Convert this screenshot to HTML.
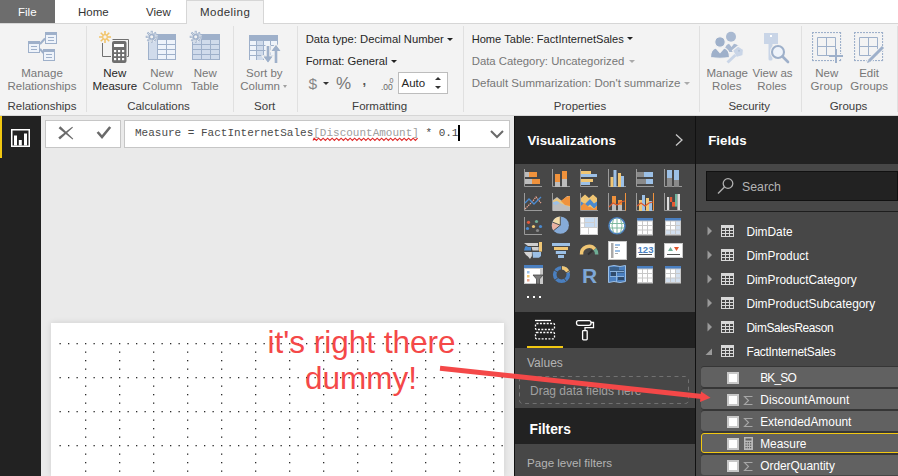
<!DOCTYPE html>
<html><head><meta charset="utf-8"><style>
html,body{margin:0;padding:0;}
body{width:898px;height:476px;overflow:hidden;position:relative;background:#eaeaea;font-family:'Liberation Sans', sans-serif;}
.t{position:absolute;white-space:nowrap;line-height:1;}
.r{position:absolute;}
svg.r{overflow:visible;}
</style></head><body>
<div class="r" style="left:0px;top:0px;width:898px;height:23px;background:#ffffff;"></div><div class="r" style="left:0px;top:23px;width:898px;height:1px;background:#d6d6d6;"></div><div class="r" style="left:0px;top:0px;width:55px;height:23px;background:#6d6d6d;"></div><div class="t" style="left:18px;top:6.87px;font-size:11.5px;color:#ffffff;font-weight:400;font-family:'Liberation Sans', sans-serif;">File</div><div class="t" style="left:78px;top:7.27px;font-size:11.5px;color:#333;font-weight:400;font-family:'Liberation Sans', sans-serif;">Home</div><div class="t" style="left:146px;top:7.27px;font-size:11.5px;color:#333;font-weight:400;font-family:'Liberation Sans', sans-serif;">View</div><div class="r" style="left:186px;top:0px;width:78px;height:24px;background:#f3f3f3;border:1px solid #d6d6d6;border-bottom:none;box-sizing:border-box;"></div><div class="t" style="left:200px;top:7.27px;font-size:11.5px;color:#333;font-weight:400;font-family:'Liberation Sans', sans-serif;letter-spacing:0.45px;">Modeling</div><div class="r" style="left:0px;top:24px;width:898px;height:91px;background:#f3f3f3;"></div><div class="r" style="left:0px;top:115px;width:898px;height:1px;background:#d6d6d6;"></div><div class="r" style="left:86px;top:26px;width:1px;height:86px;background:#e0e0e0;"></div><div class="r" style="left:233px;top:26px;width:1px;height:86px;background:#e0e0e0;"></div><div class="r" style="left:297px;top:26px;width:1px;height:86px;background:#e0e0e0;"></div><div class="r" style="left:463px;top:26px;width:1px;height:86px;background:#e0e0e0;"></div><div class="r" style="left:699px;top:26px;width:1px;height:86px;background:#e0e0e0;"></div><div class="r" style="left:801px;top:26px;width:1px;height:86px;background:#e0e0e0;"></div><div class="r" style="left:897px;top:26px;width:1px;height:86px;background:#e0e0e0;"></div><div class="t" style="left:-258px;width:600px;text-align:center;top:100.77px;font-size:11.5px;color:#3c3c3c;font-weight:400;font-family:'Liberation Sans', sans-serif;">Relationships</div><div class="t" style="left:-141.5px;width:600px;text-align:center;top:100.77px;font-size:11.5px;color:#3c3c3c;font-weight:400;font-family:'Liberation Sans', sans-serif;">Calculations</div><div class="t" style="left:-35.39999999999998px;width:600px;text-align:center;top:100.77px;font-size:11.5px;color:#3c3c3c;font-weight:400;font-family:'Liberation Sans', sans-serif;">Sort</div><div class="t" style="left:79.60000000000002px;width:600px;text-align:center;top:100.77px;font-size:11.5px;color:#3c3c3c;font-weight:400;font-family:'Liberation Sans', sans-serif;">Formatting</div><div class="t" style="left:280px;width:600px;text-align:center;top:100.77px;font-size:11.5px;color:#3c3c3c;font-weight:400;font-family:'Liberation Sans', sans-serif;">Properties</div><div class="t" style="left:449.20000000000005px;width:600px;text-align:center;top:100.77px;font-size:11.5px;color:#3c3c3c;font-weight:400;font-family:'Liberation Sans', sans-serif;">Security</div><div class="t" style="left:548.5px;width:600px;text-align:center;top:100.77px;font-size:11.5px;color:#3c3c3c;font-weight:400;font-family:'Liberation Sans', sans-serif;">Groups</div><div class="t" style="left:-258px;width:600px;text-align:center;top:68.27px;font-size:11.5px;color:#777777;font-weight:400;font-family:'Liberation Sans', sans-serif;">Manage</div><div class="t" style="left:-258px;width:600px;text-align:center;top:81.27px;font-size:11.5px;color:#777777;font-weight:400;font-family:'Liberation Sans', sans-serif;">Relationships</div><div class="t" style="left:-185.2px;width:600px;text-align:center;top:68.27px;font-size:11.5px;color:#262626;font-weight:400;font-family:'Liberation Sans', sans-serif;">New</div><div class="t" style="left:-185.2px;width:600px;text-align:center;top:81.27px;font-size:11.5px;color:#262626;font-weight:400;font-family:'Liberation Sans', sans-serif;">Measure</div><div class="t" style="left:-138.3px;width:600px;text-align:center;top:68.27px;font-size:11.5px;color:#777777;font-weight:400;font-family:'Liberation Sans', sans-serif;">New</div><div class="t" style="left:-137.6px;width:600px;text-align:center;top:81.27px;font-size:11.5px;color:#777777;font-weight:400;font-family:'Liberation Sans', sans-serif;">Column</div><div class="t" style="left:-94.69999999999999px;width:600px;text-align:center;top:68.27px;font-size:11.5px;color:#777777;font-weight:400;font-family:'Liberation Sans', sans-serif;">New</div><div class="t" style="left:-95.19999999999999px;width:600px;text-align:center;top:81.27px;font-size:11.5px;color:#777777;font-weight:400;font-family:'Liberation Sans', sans-serif;">Table</div><div class="t" style="left:-35.69999999999999px;width:600px;text-align:center;top:68.27px;font-size:11.5px;color:#777777;font-weight:400;font-family:'Liberation Sans', sans-serif;">Sort by</div><div class="t" style="left:-39.89999999999998px;width:600px;text-align:center;top:81.27px;font-size:11.5px;color:#777777;font-weight:400;font-family:'Liberation Sans', sans-serif;">Column</div><div class="r" style="left:283px;top:85px;width:0;height:0;border-left:2.5px solid transparent;border-right:2.5px solid transparent;border-top:3px solid #a0a0a0;"></div><div class="t" style="left:427.20000000000005px;width:600px;text-align:center;top:68.27px;font-size:11.5px;color:#777777;font-weight:400;font-family:'Liberation Sans', sans-serif;">Manage</div><div class="t" style="left:426.79999999999995px;width:600px;text-align:center;top:81.27px;font-size:11.5px;color:#777777;font-weight:400;font-family:'Liberation Sans', sans-serif;">Roles</div><div class="t" style="left:472.6px;width:600px;text-align:center;top:68.27px;font-size:11.5px;color:#777777;font-weight:400;font-family:'Liberation Sans', sans-serif;">View as</div><div class="t" style="left:471.9px;width:600px;text-align:center;top:81.27px;font-size:11.5px;color:#777777;font-weight:400;font-family:'Liberation Sans', sans-serif;">Roles</div><div class="t" style="left:526.8px;width:600px;text-align:center;top:68.27px;font-size:11.5px;color:#777777;font-weight:400;font-family:'Liberation Sans', sans-serif;">New</div><div class="t" style="left:526.6px;width:600px;text-align:center;top:81.27px;font-size:11.5px;color:#777777;font-weight:400;font-family:'Liberation Sans', sans-serif;">Group</div><div class="t" style="left:569.1px;width:600px;text-align:center;top:68.27px;font-size:11.5px;color:#777777;font-weight:400;font-family:'Liberation Sans', sans-serif;">Edit</div><div class="t" style="left:569.1px;width:600px;text-align:center;top:81.27px;font-size:11.5px;color:#777777;font-weight:400;font-family:'Liberation Sans', sans-serif;">Groups</div><div class="t" style="left:305.7px;top:34.48px;font-size:11.25px;color:#262626;font-weight:400;font-family:'Liberation Sans', sans-serif;">Data type: Decimal Number</div><div class="r" style="left:447px;top:37.5px;width:0;height:0;border-left:3px solid transparent;border-right:3px solid transparent;border-top:3px solid #222;"></div><div class="t" style="left:305.7px;top:56.48px;font-size:11.25px;color:#262626;font-weight:400;font-family:'Liberation Sans', sans-serif;">Format: General</div><div class="r" style="left:390.5px;top:59.5px;width:0;height:0;border-left:3px solid transparent;border-right:3px solid transparent;border-top:3px solid #222;"></div><div class="t" style="left:308.5px;top:76.38px;font-size:15.5px;color:#858585;font-weight:400;font-family:'Liberation Sans', sans-serif;">$</div><div class="r" style="left:322.5px;top:81.5px;width:0;height:0;border-left:3px solid transparent;border-right:3px solid transparent;border-top:3px solid #333;"></div><div class="t" style="left:336px;top:75.41px;font-size:17px;color:#777;font-weight:400;font-family:'Liberation Sans', sans-serif;">%</div><div class="t" style="left:362.5px;top:73.50px;font-size:13px;color:#555;font-weight:700;font-family:'Liberation Sans', sans-serif;">,</div><div class="t" style="left:381px;top:82.80px;font-size:8.5px;color:#666;font-weight:400;font-family:'Liberation Sans', sans-serif;">.00</div><div class="t" style="left:389.5px;top:77.07px;font-size:7px;color:#666;font-weight:400;font-family:'Liberation Sans', sans-serif;">0</div><div class="r" style="left:398px;top:72px;width:50px;height:22px;background:#ffffff;border:1px solid #bdbdbd;box-sizing:border-box;"></div><div class="t" style="left:401.5px;top:78.07px;font-size:11.5px;color:#262626;font-weight:400;font-family:'Liberation Sans', sans-serif;">Auto</div><div class="r" style="left:435px;top:76.5px;width:0;height:0;border-left:3px solid transparent;border-right:3px solid transparent;border-bottom:3px solid #333;"></div><div class="r" style="left:435px;top:86px;width:0;height:0;border-left:3px solid transparent;border-right:3px solid transparent;border-top:3px solid #333;"></div><div class="t" style="left:471.7px;top:34.10px;font-size:11.1px;color:#262626;font-weight:400;font-family:'Liberation Sans', sans-serif;">Home Table: FactInternetSales</div><div class="r" style="left:627px;top:37px;width:0;height:0;border-left:3px solid transparent;border-right:3px solid transparent;border-top:3px solid #222;"></div><div class="t" style="left:471.7px;top:56.09px;font-size:11.35px;color:#777777;font-weight:400;font-family:'Liberation Sans', sans-serif;">Data Category: Uncategorized</div><div class="r" style="left:629px;top:59.5px;width:0;height:0;border-left:3px solid transparent;border-right:3px solid transparent;border-top:3px solid #aaa;"></div><div class="t" style="left:471.7px;top:78.27px;font-size:11.5px;color:#777777;font-weight:400;font-family:'Liberation Sans', sans-serif;">Default Summarization: Don&#39;t summarize</div><div class="r" style="left:683.5px;top:81.5px;width:0;height:0;border-left:3px solid transparent;border-right:3px solid transparent;border-top:3px solid #aaa;"></div><svg class="r" style="left:24px;top:28px;" width="38" height="38" viewBox="0 0 38 38"><rect x="21.5" y="4.5" width="11" height="11" fill="#eef3fa" stroke="#9eb0ca"/><rect x="21" y="4" width="12" height="3" fill="#9eb0ca"/><rect x="24" y="9" width="6" height="1" fill="#9eb0ca"/><rect x="24" y="12" width="6" height="1" fill="#9eb0ca"/><rect x="4.5" y="13.5" width="11" height="11" fill="#eef3fa" stroke="#9eb0ca"/><rect x="4" y="13" width="12" height="3" fill="#9eb0ca"/><rect x="7" y="18" width="6" height="1" fill="#9eb0ca"/><rect x="7" y="21" width="6" height="1" fill="#9eb0ca"/><rect x="19.5" y="21.5" width="11" height="11" fill="#eef3fa" stroke="#9eb0ca"/><rect x="19" y="21" width="12" height="3" fill="#9eb0ca"/><rect x="22" y="26" width="6" height="1" fill="#9eb0ca"/><rect x="22" y="29" width="6" height="1" fill="#9eb0ca"/><path d="M16 16 L21 10.5 M16 21 L19.5 25" stroke="#9eb0ca" stroke-width="2"/></svg><svg class="r" style="left:96px;top:28px;" width="38" height="38" viewBox="0 0 38 38"><line x1="11.5" y1="9.0" x2="15.0" y2="9.0" stroke="#f2c46a" stroke-width="1.6"/><line x1="10.767768125698066" y1="10.767765780233894" x2="13.242643501675357" y2="13.242637872561346" stroke="#f2c46a" stroke-width="1.6"/><line x1="9.000003316987241" y1="11.499999999997799" x2="9.00000796076938" y2="14.999999999994719" stroke="#f2c46a" stroke-width="1.6"/><line x1="7.23223656523339" y1="10.767770471159126" x2="4.757367756560136" y2="13.242649130781903" stroke="#f2c46a" stroke-width="1.6"/><line x1="6.500000000008802" y1="9.000006633974483" x2="3.0000000000211244" y2="9.00001592153876" stroke="#f2c46a" stroke-width="1.6"/><line x1="7.2322271833829275" y1="7.232238910703785" x2="4.757345240119025" y2="4.757373385689084" stroke="#f2c46a" stroke-width="1.6"/><line x1="8.999990049038274" y1="6.500000000019805" x2="8.999976117691856" y2="3.000000000047531" stroke="#f2c46a" stroke-width="1.6"/><line x1="10.767758743822707" y1="7.23222483792809" x2="13.242620985174497" y2="4.757339611027417" stroke="#f2c46a" stroke-width="1.6"/><circle cx="9" cy="9" r="2.3" fill="none" stroke="#f2c46a" stroke-width="1.2"/><path d="M6.5 15 V28.5 H15 M16.5 11.5 H32.5 V28.5 H31" fill="none" stroke="#707070" stroke-width="1"/><rect x="16" y="13" width="14.5" height="22" rx="2" fill="#6e6e6e"/><rect x="18" y="16" width="10" height="3" fill="#fff"/><rect x="18" y="22" width="2.2" height="2.2" fill="#fff"/><rect x="18" y="26" width="2.2" height="2.2" fill="#fff"/><rect x="18" y="30" width="2.2" height="2.2" fill="#fff"/><rect x="22" y="22" width="2.2" height="2.2" fill="#fff"/><rect x="22" y="26" width="2.2" height="2.2" fill="#fff"/><rect x="22" y="30" width="2.2" height="2.2" fill="#fff"/><rect x="26" y="22" width="2.2" height="2.2" fill="#fff"/><rect x="26" y="26" width="2.2" height="2.2" fill="#fff"/><rect x="26" y="30" width="2.2" height="2.2" fill="#fff"/></svg><svg class="r" style="left:142px;top:28px;" width="38" height="38" viewBox="0 0 38 38"><rect x="6" y="6" width="28" height="26" fill="#9eb0ca"/><rect x="7" y="12" width="8" height="19" fill="#d0dbeb"/><rect x="16" y="12" width="8" height="4" fill="#eef3fa"/><rect x="16" y="17" width="8" height="4" fill="#eef3fa"/><rect x="16" y="22" width="8" height="4" fill="#eef3fa"/><rect x="16" y="27" width="8" height="4" fill="#eef3fa"/><rect x="25" y="12" width="8" height="4" fill="#eef3fa"/><rect x="25" y="17" width="8" height="4" fill="#eef3fa"/><rect x="25" y="22" width="8" height="4" fill="#eef3fa"/><rect x="25" y="27" width="8" height="4" fill="#eef3fa"/><line x1="11.70" y1="8.80" x2="15.70" y2="8.80" stroke="#fff" stroke-width="3"/><line x1="11.11" y1="10.21" x2="13.94" y2="13.04" stroke="#fff" stroke-width="3"/><line x1="9.70" y1="10.80" x2="9.70" y2="14.80" stroke="#fff" stroke-width="3"/><line x1="8.29" y1="10.21" x2="5.46" y2="13.04" stroke="#fff" stroke-width="3"/><line x1="7.70" y1="8.80" x2="3.70" y2="8.80" stroke="#fff" stroke-width="3"/><line x1="8.29" y1="7.39" x2="5.46" y2="4.56" stroke="#fff" stroke-width="3"/><line x1="9.70" y1="6.80" x2="9.70" y2="2.80" stroke="#fff" stroke-width="3"/><line x1="11.11" y1="7.39" x2="13.94" y2="4.56" stroke="#fff" stroke-width="3"/><line x1="11.70" y1="8.80" x2="15.70" y2="8.80" stroke="#9eb0ca" stroke-width="2.2"/><line x1="11.11" y1="10.21" x2="13.94" y2="13.04" stroke="#9eb0ca" stroke-width="2.2"/><line x1="9.70" y1="10.80" x2="9.70" y2="14.80" stroke="#9eb0ca" stroke-width="2.2"/><line x1="8.29" y1="10.21" x2="5.46" y2="13.04" stroke="#9eb0ca" stroke-width="2.2"/><line x1="7.70" y1="8.80" x2="3.70" y2="8.80" stroke="#9eb0ca" stroke-width="2.2"/><line x1="8.29" y1="7.39" x2="5.46" y2="4.56" stroke="#9eb0ca" stroke-width="2.2"/><line x1="9.70" y1="6.80" x2="9.70" y2="2.80" stroke="#9eb0ca" stroke-width="2.2"/><line x1="11.11" y1="7.39" x2="13.94" y2="4.56" stroke="#9eb0ca" stroke-width="2.2"/><line x1="12.20" y1="8.80" x2="14.90" y2="8.80" stroke="#f3f3f3" stroke-width="0.7"/><line x1="11.47" y1="10.57" x2="13.38" y2="12.48" stroke="#f3f3f3" stroke-width="0.7"/><line x1="9.70" y1="11.30" x2="9.70" y2="14.00" stroke="#f3f3f3" stroke-width="0.7"/><line x1="7.93" y1="10.57" x2="6.02" y2="12.48" stroke="#f3f3f3" stroke-width="0.7"/><line x1="7.20" y1="8.80" x2="4.50" y2="8.80" stroke="#f3f3f3" stroke-width="0.7"/><line x1="7.93" y1="7.03" x2="6.02" y2="5.12" stroke="#f3f3f3" stroke-width="0.7"/><line x1="9.70" y1="6.30" x2="9.70" y2="3.60" stroke="#f3f3f3" stroke-width="0.7"/><line x1="11.47" y1="7.03" x2="13.38" y2="5.12" stroke="#f3f3f3" stroke-width="0.7"/><circle cx="9.7" cy="8.8" r="2.2" fill="#f3f3f3" stroke="#9eb0ca" stroke-width="1.2"/></svg><svg class="r" style="left:186px;top:28px;" width="38" height="38" viewBox="0 0 38 38"><rect x="6" y="6" width="28" height="26" fill="#9eb0ca"/><rect x="7" y="12" width="8" height="4" fill="#d0dbeb"/><rect x="7" y="17" width="8" height="4" fill="#d0dbeb"/><rect x="7" y="22" width="8" height="4" fill="#d0dbeb"/><rect x="7" y="27" width="8" height="4" fill="#d0dbeb"/><rect x="16" y="12" width="8" height="4" fill="#d0dbeb"/><rect x="16" y="17" width="8" height="4" fill="#d0dbeb"/><rect x="16" y="22" width="8" height="4" fill="#d0dbeb"/><rect x="16" y="27" width="8" height="4" fill="#d0dbeb"/><rect x="25" y="12" width="8" height="4" fill="#d0dbeb"/><rect x="25" y="17" width="8" height="4" fill="#d0dbeb"/><rect x="25" y="22" width="8" height="4" fill="#d0dbeb"/><rect x="25" y="27" width="8" height="4" fill="#d0dbeb"/><line x1="11.70" y1="8.80" x2="15.70" y2="8.80" stroke="#fff" stroke-width="3"/><line x1="11.11" y1="10.21" x2="13.94" y2="13.04" stroke="#fff" stroke-width="3"/><line x1="9.70" y1="10.80" x2="9.70" y2="14.80" stroke="#fff" stroke-width="3"/><line x1="8.29" y1="10.21" x2="5.46" y2="13.04" stroke="#fff" stroke-width="3"/><line x1="7.70" y1="8.80" x2="3.70" y2="8.80" stroke="#fff" stroke-width="3"/><line x1="8.29" y1="7.39" x2="5.46" y2="4.56" stroke="#fff" stroke-width="3"/><line x1="9.70" y1="6.80" x2="9.70" y2="2.80" stroke="#fff" stroke-width="3"/><line x1="11.11" y1="7.39" x2="13.94" y2="4.56" stroke="#fff" stroke-width="3"/><line x1="11.70" y1="8.80" x2="15.70" y2="8.80" stroke="#9eb0ca" stroke-width="2.2"/><line x1="11.11" y1="10.21" x2="13.94" y2="13.04" stroke="#9eb0ca" stroke-width="2.2"/><line x1="9.70" y1="10.80" x2="9.70" y2="14.80" stroke="#9eb0ca" stroke-width="2.2"/><line x1="8.29" y1="10.21" x2="5.46" y2="13.04" stroke="#9eb0ca" stroke-width="2.2"/><line x1="7.70" y1="8.80" x2="3.70" y2="8.80" stroke="#9eb0ca" stroke-width="2.2"/><line x1="8.29" y1="7.39" x2="5.46" y2="4.56" stroke="#9eb0ca" stroke-width="2.2"/><line x1="9.70" y1="6.80" x2="9.70" y2="2.80" stroke="#9eb0ca" stroke-width="2.2"/><line x1="11.11" y1="7.39" x2="13.94" y2="4.56" stroke="#9eb0ca" stroke-width="2.2"/><line x1="12.20" y1="8.80" x2="14.90" y2="8.80" stroke="#f3f3f3" stroke-width="0.7"/><line x1="11.47" y1="10.57" x2="13.38" y2="12.48" stroke="#f3f3f3" stroke-width="0.7"/><line x1="9.70" y1="11.30" x2="9.70" y2="14.00" stroke="#f3f3f3" stroke-width="0.7"/><line x1="7.93" y1="10.57" x2="6.02" y2="12.48" stroke="#f3f3f3" stroke-width="0.7"/><line x1="7.20" y1="8.80" x2="4.50" y2="8.80" stroke="#f3f3f3" stroke-width="0.7"/><line x1="7.93" y1="7.03" x2="6.02" y2="5.12" stroke="#f3f3f3" stroke-width="0.7"/><line x1="9.70" y1="6.30" x2="9.70" y2="3.60" stroke="#f3f3f3" stroke-width="0.7"/><line x1="11.47" y1="7.03" x2="13.38" y2="5.12" stroke="#f3f3f3" stroke-width="0.7"/><circle cx="9.7" cy="8.8" r="2.2" fill="#f3f3f3" stroke="#9eb0ca" stroke-width="1.2"/></svg><svg class="r" style="left:245px;top:30px;" width="40" height="38" viewBox="0 0 40 38"><rect x="4" y="5" width="29" height="25" fill="#9eb0ca"/><rect x="5" y="11" width="6" height="4" fill="#eef3fa"/><rect x="5" y="16" width="6" height="4" fill="#eef3fa"/><rect x="5" y="21" width="6" height="4" fill="#eef3fa"/><rect x="5" y="26" width="6" height="4" fill="#eef3fa"/><rect x="12" y="11" width="6" height="4" fill="#d0dbeb"/><rect x="12" y="16" width="6" height="4" fill="#d0dbeb"/><rect x="12" y="21" width="6" height="4" fill="#d0dbeb"/><rect x="12" y="26" width="6" height="4" fill="#d0dbeb"/><rect x="19" y="11" width="6" height="4" fill="#eef3fa"/><rect x="19" y="16" width="6" height="4" fill="#eef3fa"/><rect x="19" y="21" width="6" height="4" fill="#eef3fa"/><rect x="19" y="26" width="6" height="4" fill="#eef3fa"/><rect x="26" y="11" width="6" height="4" fill="#eef3fa"/><rect x="26" y="16" width="6" height="4" fill="#eef3fa"/><rect x="26" y="21" width="6" height="4" fill="#eef3fa"/><rect x="26" y="26" width="6" height="4" fill="#eef3fa"/><path d="M23 15 V30 M31 18 V33" stroke="#f3f3f3" stroke-width="5"/><path d="M17.5 26 L23 33.5 L28.5 26 Z M25.5 21.5 L31 14 L36.5 21.5 Z" fill="#9eb0ca" stroke="#f3f3f3" stroke-width="1.5"/><path d="M23 16 V27 M31 21 V33" stroke="#9eb0ca" stroke-width="2.6"/><path d="M18.5 26.5 L23 32.5 L27.5 26.5 Z M26.5 21 L31 15 L35.5 21 Z" fill="#9eb0ca"/></svg><svg class="r" style="left:706px;top:28px;" width="40" height="38" viewBox="0 0 40 38"><circle cx="25" cy="8.8" r="5" fill="#a9b9d1"/><path d="M18.5 23 Q19.5 16.3 23 15.8 L25.5 19 L28 15.8 Q32 16.3 33.5 19.5 L29 24 L21 24 Z" fill="#a9b9d1"/><circle cx="14" cy="14" r="5.2" fill="#9eb0ca" stroke="#f3f3f3" stroke-width="1"/><path d="M4.5 29.5 Q4.5 21 10 20 L14 24.5 L18 20 Q23.5 21 23.5 29.5 Q14 31 4.5 29.5 Z" fill="#9eb0ca" stroke="#f3f3f3" stroke-width="1.2"/><path d="M21.5 34.5 L29.5 27" stroke="#f3f3f3" stroke-width="5"/><path d="M26.5 22.5 L32 18 L37.5 21.5 L37 27.5 L30.5 29.5 Z" fill="#c9d5e7" stroke="#f3f3f3" stroke-width="1.2" stroke-linejoin="round"/><path d="M21.5 34.5 L29.5 27" stroke="#c9d5e7" stroke-width="3"/><circle cx="33" cy="22.8" r="1" fill="#b3c2d8"/></svg><svg class="r" style="left:758px;top:28px;" width="38" height="38" viewBox="0 0 38 38"><rect x="6" y="5" width="14" height="11" fill="#c9d5e7"/><rect x="12" y="7" width="2" height="2" fill="#fff"/><rect x="10.5" y="15" width="4" height="17.5" rx="1.5" fill="#c9d5e7"/><circle cx="20" cy="24" r="6" fill="#eef3fa" stroke="#f3f3f3" stroke-width="4"/><circle cx="20" cy="24" r="6" fill="#eef3fa" stroke="#9eb0ca" stroke-width="2.1"/><path d="M24.5 28.5 L30 34" stroke="#9eb0ca" stroke-width="2.6" stroke-linecap="round"/></svg><svg class="r" style="left:808px;top:28px;" width="82" height="38" viewBox="0 0 82 38"><rect x="4" y="4" width="2" height="1.1" fill="#9eb0ca"/><rect x="4" y="32" width="2" height="1.1" fill="#9eb0ca"/><rect x="4" y="4" width="1.1" height="2" fill="#9eb0ca"/><rect x="32" y="4" width="1.1" height="2" fill="#9eb0ca"/><rect x="7" y="4" width="2" height="1.1" fill="#9eb0ca"/><rect x="7" y="32" width="2" height="1.1" fill="#9eb0ca"/><rect x="4" y="7" width="1.1" height="2" fill="#9eb0ca"/><rect x="32" y="7" width="1.1" height="2" fill="#9eb0ca"/><rect x="10" y="4" width="2" height="1.1" fill="#9eb0ca"/><rect x="10" y="32" width="2" height="1.1" fill="#9eb0ca"/><rect x="4" y="10" width="1.1" height="2" fill="#9eb0ca"/><rect x="32" y="10" width="1.1" height="2" fill="#9eb0ca"/><rect x="13" y="4" width="2" height="1.1" fill="#9eb0ca"/><rect x="13" y="32" width="2" height="1.1" fill="#9eb0ca"/><rect x="4" y="13" width="1.1" height="2" fill="#9eb0ca"/><rect x="32" y="13" width="1.1" height="2" fill="#9eb0ca"/><rect x="16" y="4" width="2" height="1.1" fill="#9eb0ca"/><rect x="16" y="32" width="2" height="1.1" fill="#9eb0ca"/><rect x="4" y="16" width="1.1" height="2" fill="#9eb0ca"/><rect x="32" y="16" width="1.1" height="2" fill="#9eb0ca"/><rect x="19" y="4" width="2" height="1.1" fill="#9eb0ca"/><rect x="19" y="32" width="2" height="1.1" fill="#9eb0ca"/><rect x="4" y="19" width="1.1" height="2" fill="#9eb0ca"/><rect x="32" y="19" width="1.1" height="2" fill="#9eb0ca"/><rect x="22" y="4" width="2" height="1.1" fill="#9eb0ca"/><rect x="22" y="32" width="2" height="1.1" fill="#9eb0ca"/><rect x="4" y="22" width="1.1" height="2" fill="#9eb0ca"/><rect x="32" y="22" width="1.1" height="2" fill="#9eb0ca"/><rect x="25" y="4" width="2" height="1.1" fill="#9eb0ca"/><rect x="25" y="32" width="2" height="1.1" fill="#9eb0ca"/><rect x="4" y="25" width="1.1" height="2" fill="#9eb0ca"/><rect x="32" y="25" width="1.1" height="2" fill="#9eb0ca"/><rect x="28" y="4" width="2" height="1.1" fill="#9eb0ca"/><rect x="28" y="32" width="2" height="1.1" fill="#9eb0ca"/><rect x="4" y="28" width="1.1" height="2" fill="#9eb0ca"/><rect x="32" y="28" width="1.1" height="2" fill="#9eb0ca"/><rect x="31" y="4" width="2" height="1.1" fill="#9eb0ca"/><rect x="31" y="32" width="2" height="1.1" fill="#9eb0ca"/><rect x="4" y="31" width="1.1" height="2" fill="#9eb0ca"/><rect x="32" y="31" width="1.1" height="2" fill="#9eb0ca"/><path d="M9.5 9.5 H27.5 V27.5 H9.5 Z M18.5 9.5 V27.5 M9.5 18.5 H27.5" fill="none" stroke="#9eb0ca" stroke-width="1"/><path d="M28 21 V35 M21 28 H35" stroke="#f3f3f3" stroke-width="4"/><path d="M28 21 V35 M21 28 H35" stroke="#9eb0ca" stroke-width="2"/><rect x="46" y="4" width="2" height="1.1" fill="#9eb0ca"/><rect x="46" y="32" width="2" height="1.1" fill="#9eb0ca"/><rect x="46" y="4" width="1.1" height="2" fill="#9eb0ca"/><rect x="74" y="4" width="1.1" height="2" fill="#9eb0ca"/><rect x="49" y="4" width="2" height="1.1" fill="#9eb0ca"/><rect x="49" y="32" width="2" height="1.1" fill="#9eb0ca"/><rect x="46" y="7" width="1.1" height="2" fill="#9eb0ca"/><rect x="74" y="7" width="1.1" height="2" fill="#9eb0ca"/><rect x="52" y="4" width="2" height="1.1" fill="#9eb0ca"/><rect x="52" y="32" width="2" height="1.1" fill="#9eb0ca"/><rect x="46" y="10" width="1.1" height="2" fill="#9eb0ca"/><rect x="74" y="10" width="1.1" height="2" fill="#9eb0ca"/><rect x="55" y="4" width="2" height="1.1" fill="#9eb0ca"/><rect x="55" y="32" width="2" height="1.1" fill="#9eb0ca"/><rect x="46" y="13" width="1.1" height="2" fill="#9eb0ca"/><rect x="74" y="13" width="1.1" height="2" fill="#9eb0ca"/><rect x="58" y="4" width="2" height="1.1" fill="#9eb0ca"/><rect x="58" y="32" width="2" height="1.1" fill="#9eb0ca"/><rect x="46" y="16" width="1.1" height="2" fill="#9eb0ca"/><rect x="74" y="16" width="1.1" height="2" fill="#9eb0ca"/><rect x="61" y="4" width="2" height="1.1" fill="#9eb0ca"/><rect x="61" y="32" width="2" height="1.1" fill="#9eb0ca"/><rect x="46" y="19" width="1.1" height="2" fill="#9eb0ca"/><rect x="74" y="19" width="1.1" height="2" fill="#9eb0ca"/><rect x="64" y="4" width="2" height="1.1" fill="#9eb0ca"/><rect x="64" y="32" width="2" height="1.1" fill="#9eb0ca"/><rect x="46" y="22" width="1.1" height="2" fill="#9eb0ca"/><rect x="74" y="22" width="1.1" height="2" fill="#9eb0ca"/><rect x="67" y="4" width="2" height="1.1" fill="#9eb0ca"/><rect x="67" y="32" width="2" height="1.1" fill="#9eb0ca"/><rect x="46" y="25" width="1.1" height="2" fill="#9eb0ca"/><rect x="74" y="25" width="1.1" height="2" fill="#9eb0ca"/><rect x="70" y="4" width="2" height="1.1" fill="#9eb0ca"/><rect x="70" y="32" width="2" height="1.1" fill="#9eb0ca"/><rect x="46" y="28" width="1.1" height="2" fill="#9eb0ca"/><rect x="74" y="28" width="1.1" height="2" fill="#9eb0ca"/><rect x="73" y="4" width="2" height="1.1" fill="#9eb0ca"/><rect x="73" y="32" width="2" height="1.1" fill="#9eb0ca"/><rect x="46" y="31" width="1.1" height="2" fill="#9eb0ca"/><rect x="74" y="31" width="1.1" height="2" fill="#9eb0ca"/><path d="M51.5 9.5 H69.5 V27.5 H51.5 Z M60.5 9.5 V27.5 M51.5 18.5 H69.5" fill="none" stroke="#9eb0ca" stroke-width="1"/><path d="M60 34 L75 19" stroke="#f3f3f3" stroke-width="5"/><path d="M61 33 L75 19" stroke="#9eb0ca" stroke-width="3"/><path d="M59 35 L60 32 L62 34 Z" fill="#9eb0ca"/></svg><div class="r" style="left:0px;top:116px;width:898px;height:360px;background:#eaeaea;"></div><div class="r" style="left:0px;top:116px;width:41px;height:360px;background:#222222;"></div><div class="r" style="left:0px;top:116px;width:2px;height:42px;background:#f2c811;"></div><svg class="r" style="left:10px;top:128px;" width="22" height="20" viewBox="0 0 22 20"><rect x="1.75" y="1.75" width="17.5" height="16.5" fill="none" stroke="#fff" stroke-width="1.5"/><rect x="4" y="7.5" width="3" height="10" fill="#fff"/><rect x="8.8" y="12" width="3" height="5.5" fill="#fff"/><rect x="14" y="5.5" width="3" height="12" fill="#fff"/></svg><div class="r" style="left:45px;top:120px;width:76px;height:28px;background:#ffffff;border:1px solid #c6c6c6;box-sizing:border-box;"></div><svg class="r" style="left:52px;top:120px;" width="30" height="26" viewBox="0 0 30 26"><path d="M6.64 8.17 L20.53 19.51 L21.27 18.69 L8.36 6.23 Z" fill="#6a6a6a"/><path d="M7.93 19.50 L20.95 7.62 L20.25 6.78 L6.27 17.50 Z" fill="#6a6a6a"/></svg><svg class="r" style="left:90px;top:120px;" width="26" height="26" viewBox="0 0 26 26"><path d="M7.6 12 L12 17 L20.2 7" fill="none" stroke="#6a6a6a" stroke-width="2.6"/></svg><div class="r" style="left:124px;top:120px;width:386px;height:28px;background:#ffffff;border:1px solid #c6c6c6;box-sizing:border-box;"></div><div class="t" style="left:135px;top:128.19px;font-size:11px;color:#4a4a4a;font-weight:400;font-family:'Liberation Mono', monospace;letter-spacing:0px;">Measure = FactInternetSales<span style="color:#a0a0a0">[DiscountAmount]</span> * 0.1</div><svg class="r" style="left:313px;top:138px;" width="110" height="4" viewBox="0 0 110 4"><path d="M0 2.5 L1.125 0.2 L3.375 2.5 L5.625 0.2 L7.875 2.5 L10.125 0.2 L12.375 2.5 L14.625 0.2 L16.875 2.5 L19.125 0.2 L21.375 2.5 L23.625 0.2 L25.875 2.5 L28.125 0.2 L30.375 2.5 L32.625 0.2 L34.875 2.5 L37.125 0.2 L39.375 2.5 L41.625 0.2 L43.875 2.5 L46.125 0.2 L48.375 2.5 L50.625 0.2 L52.875 2.5 L55.125 0.2 L57.375 2.5 L59.625 0.2 L61.875 2.5 L64.125 0.2 L66.375 2.5 L68.625 0.2 L70.875 2.5 L73.125 0.2 L75.375 2.5 L77.625 0.2 L79.875 2.5 L82.125 0.2 L84.375 2.5 L86.625 0.2 L88.875 2.5 L91.125 0.2 L93.375 2.5 L95.625 0.2 L97.875 2.5 L100.125 0.2 L102.375 2.5 L104.625 0.2" fill="none" stroke="#e02828" stroke-width="1.1"/></svg><div class="r" style="left:458px;top:125px;width:2px;height:16px;background:#000;"></div><svg class="r" style="left:489px;top:129px;" width="16" height="10" viewBox="0 0 16 10"><path d="M2 2 L8 8 L14 2" fill="none" stroke="#6a6a6a" stroke-width="2"/></svg><div class="r" style="left:51px;top:323px;width:453px;height:153px;background:#ffffff;box-shadow:0 0 6px rgba(0,0,0,0.12);"></div><svg class="r" style="left:51px;top:323px;" width="453" height="153" viewBox="0 0 453 153"><rect x="8.5" y="20.0" width="1.3" height="1.3" fill="#2a2a2a"/><rect x="17.0" y="20.0" width="1.3" height="1.3" fill="#2a2a2a"/><rect x="25.5" y="20.0" width="1.3" height="1.3" fill="#2a2a2a"/><rect x="34.0" y="20.0" width="1.3" height="1.3" fill="#2a2a2a"/><rect x="42.5" y="20.0" width="1.3" height="1.3" fill="#2a2a2a"/><rect x="51.0" y="20.0" width="1.3" height="1.3" fill="#2a2a2a"/><rect x="59.5" y="20.0" width="1.3" height="1.3" fill="#2a2a2a"/><rect x="68.0" y="20.0" width="1.3" height="1.3" fill="#2a2a2a"/><rect x="76.5" y="20.0" width="1.3" height="1.3" fill="#2a2a2a"/><rect x="85.0" y="20.0" width="1.3" height="1.3" fill="#2a2a2a"/><rect x="93.5" y="20.0" width="1.3" height="1.3" fill="#2a2a2a"/><rect x="102.0" y="20.0" width="1.3" height="1.3" fill="#2a2a2a"/><rect x="110.5" y="20.0" width="1.3" height="1.3" fill="#2a2a2a"/><rect x="119.0" y="20.0" width="1.3" height="1.3" fill="#2a2a2a"/><rect x="127.5" y="20.0" width="1.3" height="1.3" fill="#2a2a2a"/><rect x="136.0" y="20.0" width="1.3" height="1.3" fill="#2a2a2a"/><rect x="144.5" y="20.0" width="1.3" height="1.3" fill="#2a2a2a"/><rect x="153.0" y="20.0" width="1.3" height="1.3" fill="#2a2a2a"/><rect x="161.5" y="20.0" width="1.3" height="1.3" fill="#2a2a2a"/><rect x="170.0" y="20.0" width="1.3" height="1.3" fill="#2a2a2a"/><rect x="178.5" y="20.0" width="1.3" height="1.3" fill="#2a2a2a"/><rect x="187.0" y="20.0" width="1.3" height="1.3" fill="#2a2a2a"/><rect x="195.5" y="20.0" width="1.3" height="1.3" fill="#2a2a2a"/><rect x="204.0" y="20.0" width="1.3" height="1.3" fill="#2a2a2a"/><rect x="212.5" y="20.0" width="1.3" height="1.3" fill="#2a2a2a"/><rect x="221.0" y="20.0" width="1.3" height="1.3" fill="#2a2a2a"/><rect x="229.5" y="20.0" width="1.3" height="1.3" fill="#2a2a2a"/><rect x="238.0" y="20.0" width="1.3" height="1.3" fill="#2a2a2a"/><rect x="246.5" y="20.0" width="1.3" height="1.3" fill="#2a2a2a"/><rect x="255.0" y="20.0" width="1.3" height="1.3" fill="#2a2a2a"/><rect x="263.5" y="20.0" width="1.3" height="1.3" fill="#2a2a2a"/><rect x="272.0" y="20.0" width="1.3" height="1.3" fill="#2a2a2a"/><rect x="280.5" y="20.0" width="1.3" height="1.3" fill="#2a2a2a"/><rect x="289.0" y="20.0" width="1.3" height="1.3" fill="#2a2a2a"/><rect x="297.5" y="20.0" width="1.3" height="1.3" fill="#2a2a2a"/><rect x="306.0" y="20.0" width="1.3" height="1.3" fill="#2a2a2a"/><rect x="314.5" y="20.0" width="1.3" height="1.3" fill="#2a2a2a"/><rect x="323.0" y="20.0" width="1.3" height="1.3" fill="#2a2a2a"/><rect x="331.5" y="20.0" width="1.3" height="1.3" fill="#2a2a2a"/><rect x="340.0" y="20.0" width="1.3" height="1.3" fill="#2a2a2a"/><rect x="348.5" y="20.0" width="1.3" height="1.3" fill="#2a2a2a"/><rect x="357.0" y="20.0" width="1.3" height="1.3" fill="#2a2a2a"/><rect x="365.5" y="20.0" width="1.3" height="1.3" fill="#2a2a2a"/><rect x="374.0" y="20.0" width="1.3" height="1.3" fill="#2a2a2a"/><rect x="382.5" y="20.0" width="1.3" height="1.3" fill="#2a2a2a"/><rect x="391.0" y="20.0" width="1.3" height="1.3" fill="#2a2a2a"/><rect x="399.5" y="20.0" width="1.3" height="1.3" fill="#2a2a2a"/><rect x="408.0" y="20.0" width="1.3" height="1.3" fill="#2a2a2a"/><rect x="416.5" y="20.0" width="1.3" height="1.3" fill="#2a2a2a"/><rect x="425.0" y="20.0" width="1.3" height="1.3" fill="#2a2a2a"/><rect x="433.5" y="20.0" width="1.3" height="1.3" fill="#2a2a2a"/><rect x="442.0" y="20.0" width="1.3" height="1.3" fill="#2a2a2a"/><rect x="450.5" y="20.0" width="1.3" height="1.3" fill="#2a2a2a"/><rect x="8.5" y="54.0" width="1.3" height="1.3" fill="#2a2a2a"/><rect x="17.0" y="54.0" width="1.3" height="1.3" fill="#2a2a2a"/><rect x="25.5" y="54.0" width="1.3" height="1.3" fill="#2a2a2a"/><rect x="34.0" y="54.0" width="1.3" height="1.3" fill="#2a2a2a"/><rect x="42.5" y="54.0" width="1.3" height="1.3" fill="#2a2a2a"/><rect x="51.0" y="54.0" width="1.3" height="1.3" fill="#2a2a2a"/><rect x="59.5" y="54.0" width="1.3" height="1.3" fill="#2a2a2a"/><rect x="68.0" y="54.0" width="1.3" height="1.3" fill="#2a2a2a"/><rect x="76.5" y="54.0" width="1.3" height="1.3" fill="#2a2a2a"/><rect x="85.0" y="54.0" width="1.3" height="1.3" fill="#2a2a2a"/><rect x="93.5" y="54.0" width="1.3" height="1.3" fill="#2a2a2a"/><rect x="102.0" y="54.0" width="1.3" height="1.3" fill="#2a2a2a"/><rect x="110.5" y="54.0" width="1.3" height="1.3" fill="#2a2a2a"/><rect x="119.0" y="54.0" width="1.3" height="1.3" fill="#2a2a2a"/><rect x="127.5" y="54.0" width="1.3" height="1.3" fill="#2a2a2a"/><rect x="136.0" y="54.0" width="1.3" height="1.3" fill="#2a2a2a"/><rect x="144.5" y="54.0" width="1.3" height="1.3" fill="#2a2a2a"/><rect x="153.0" y="54.0" width="1.3" height="1.3" fill="#2a2a2a"/><rect x="161.5" y="54.0" width="1.3" height="1.3" fill="#2a2a2a"/><rect x="170.0" y="54.0" width="1.3" height="1.3" fill="#2a2a2a"/><rect x="178.5" y="54.0" width="1.3" height="1.3" fill="#2a2a2a"/><rect x="187.0" y="54.0" width="1.3" height="1.3" fill="#2a2a2a"/><rect x="195.5" y="54.0" width="1.3" height="1.3" fill="#2a2a2a"/><rect x="204.0" y="54.0" width="1.3" height="1.3" fill="#2a2a2a"/><rect x="212.5" y="54.0" width="1.3" height="1.3" fill="#2a2a2a"/><rect x="221.0" y="54.0" width="1.3" height="1.3" fill="#2a2a2a"/><rect x="229.5" y="54.0" width="1.3" height="1.3" fill="#2a2a2a"/><rect x="238.0" y="54.0" width="1.3" height="1.3" fill="#2a2a2a"/><rect x="246.5" y="54.0" width="1.3" height="1.3" fill="#2a2a2a"/><rect x="255.0" y="54.0" width="1.3" height="1.3" fill="#2a2a2a"/><rect x="263.5" y="54.0" width="1.3" height="1.3" fill="#2a2a2a"/><rect x="272.0" y="54.0" width="1.3" height="1.3" fill="#2a2a2a"/><rect x="280.5" y="54.0" width="1.3" height="1.3" fill="#2a2a2a"/><rect x="289.0" y="54.0" width="1.3" height="1.3" fill="#2a2a2a"/><rect x="297.5" y="54.0" width="1.3" height="1.3" fill="#2a2a2a"/><rect x="306.0" y="54.0" width="1.3" height="1.3" fill="#2a2a2a"/><rect x="314.5" y="54.0" width="1.3" height="1.3" fill="#2a2a2a"/><rect x="323.0" y="54.0" width="1.3" height="1.3" fill="#2a2a2a"/><rect x="331.5" y="54.0" width="1.3" height="1.3" fill="#2a2a2a"/><rect x="340.0" y="54.0" width="1.3" height="1.3" fill="#2a2a2a"/><rect x="348.5" y="54.0" width="1.3" height="1.3" fill="#2a2a2a"/><rect x="357.0" y="54.0" width="1.3" height="1.3" fill="#2a2a2a"/><rect x="365.5" y="54.0" width="1.3" height="1.3" fill="#2a2a2a"/><rect x="374.0" y="54.0" width="1.3" height="1.3" fill="#2a2a2a"/><rect x="382.5" y="54.0" width="1.3" height="1.3" fill="#2a2a2a"/><rect x="391.0" y="54.0" width="1.3" height="1.3" fill="#2a2a2a"/><rect x="399.5" y="54.0" width="1.3" height="1.3" fill="#2a2a2a"/><rect x="408.0" y="54.0" width="1.3" height="1.3" fill="#2a2a2a"/><rect x="416.5" y="54.0" width="1.3" height="1.3" fill="#2a2a2a"/><rect x="425.0" y="54.0" width="1.3" height="1.3" fill="#2a2a2a"/><rect x="433.5" y="54.0" width="1.3" height="1.3" fill="#2a2a2a"/><rect x="442.0" y="54.0" width="1.3" height="1.3" fill="#2a2a2a"/><rect x="450.5" y="54.0" width="1.3" height="1.3" fill="#2a2a2a"/><rect x="8.5" y="88.0" width="1.3" height="1.3" fill="#2a2a2a"/><rect x="17.0" y="88.0" width="1.3" height="1.3" fill="#2a2a2a"/><rect x="25.5" y="88.0" width="1.3" height="1.3" fill="#2a2a2a"/><rect x="34.0" y="88.0" width="1.3" height="1.3" fill="#2a2a2a"/><rect x="42.5" y="88.0" width="1.3" height="1.3" fill="#2a2a2a"/><rect x="51.0" y="88.0" width="1.3" height="1.3" fill="#2a2a2a"/><rect x="59.5" y="88.0" width="1.3" height="1.3" fill="#2a2a2a"/><rect x="68.0" y="88.0" width="1.3" height="1.3" fill="#2a2a2a"/><rect x="76.5" y="88.0" width="1.3" height="1.3" fill="#2a2a2a"/><rect x="85.0" y="88.0" width="1.3" height="1.3" fill="#2a2a2a"/><rect x="93.5" y="88.0" width="1.3" height="1.3" fill="#2a2a2a"/><rect x="102.0" y="88.0" width="1.3" height="1.3" fill="#2a2a2a"/><rect x="110.5" y="88.0" width="1.3" height="1.3" fill="#2a2a2a"/><rect x="119.0" y="88.0" width="1.3" height="1.3" fill="#2a2a2a"/><rect x="127.5" y="88.0" width="1.3" height="1.3" fill="#2a2a2a"/><rect x="136.0" y="88.0" width="1.3" height="1.3" fill="#2a2a2a"/><rect x="144.5" y="88.0" width="1.3" height="1.3" fill="#2a2a2a"/><rect x="153.0" y="88.0" width="1.3" height="1.3" fill="#2a2a2a"/><rect x="161.5" y="88.0" width="1.3" height="1.3" fill="#2a2a2a"/><rect x="170.0" y="88.0" width="1.3" height="1.3" fill="#2a2a2a"/><rect x="178.5" y="88.0" width="1.3" height="1.3" fill="#2a2a2a"/><rect x="187.0" y="88.0" width="1.3" height="1.3" fill="#2a2a2a"/><rect x="195.5" y="88.0" width="1.3" height="1.3" fill="#2a2a2a"/><rect x="204.0" y="88.0" width="1.3" height="1.3" fill="#2a2a2a"/><rect x="212.5" y="88.0" width="1.3" height="1.3" fill="#2a2a2a"/><rect x="221.0" y="88.0" width="1.3" height="1.3" fill="#2a2a2a"/><rect x="229.5" y="88.0" width="1.3" height="1.3" fill="#2a2a2a"/><rect x="238.0" y="88.0" width="1.3" height="1.3" fill="#2a2a2a"/><rect x="246.5" y="88.0" width="1.3" height="1.3" fill="#2a2a2a"/><rect x="255.0" y="88.0" width="1.3" height="1.3" fill="#2a2a2a"/><rect x="263.5" y="88.0" width="1.3" height="1.3" fill="#2a2a2a"/><rect x="272.0" y="88.0" width="1.3" height="1.3" fill="#2a2a2a"/><rect x="280.5" y="88.0" width="1.3" height="1.3" fill="#2a2a2a"/><rect x="289.0" y="88.0" width="1.3" height="1.3" fill="#2a2a2a"/><rect x="297.5" y="88.0" width="1.3" height="1.3" fill="#2a2a2a"/><rect x="306.0" y="88.0" width="1.3" height="1.3" fill="#2a2a2a"/><rect x="314.5" y="88.0" width="1.3" height="1.3" fill="#2a2a2a"/><rect x="323.0" y="88.0" width="1.3" height="1.3" fill="#2a2a2a"/><rect x="331.5" y="88.0" width="1.3" height="1.3" fill="#2a2a2a"/><rect x="340.0" y="88.0" width="1.3" height="1.3" fill="#2a2a2a"/><rect x="348.5" y="88.0" width="1.3" height="1.3" fill="#2a2a2a"/><rect x="357.0" y="88.0" width="1.3" height="1.3" fill="#2a2a2a"/><rect x="365.5" y="88.0" width="1.3" height="1.3" fill="#2a2a2a"/><rect x="374.0" y="88.0" width="1.3" height="1.3" fill="#2a2a2a"/><rect x="382.5" y="88.0" width="1.3" height="1.3" fill="#2a2a2a"/><rect x="391.0" y="88.0" width="1.3" height="1.3" fill="#2a2a2a"/><rect x="399.5" y="88.0" width="1.3" height="1.3" fill="#2a2a2a"/><rect x="408.0" y="88.0" width="1.3" height="1.3" fill="#2a2a2a"/><rect x="416.5" y="88.0" width="1.3" height="1.3" fill="#2a2a2a"/><rect x="425.0" y="88.0" width="1.3" height="1.3" fill="#2a2a2a"/><rect x="433.5" y="88.0" width="1.3" height="1.3" fill="#2a2a2a"/><rect x="442.0" y="88.0" width="1.3" height="1.3" fill="#2a2a2a"/><rect x="450.5" y="88.0" width="1.3" height="1.3" fill="#2a2a2a"/><rect x="8.5" y="122.0" width="1.3" height="1.3" fill="#2a2a2a"/><rect x="17.0" y="122.0" width="1.3" height="1.3" fill="#2a2a2a"/><rect x="25.5" y="122.0" width="1.3" height="1.3" fill="#2a2a2a"/><rect x="34.0" y="122.0" width="1.3" height="1.3" fill="#2a2a2a"/><rect x="42.5" y="122.0" width="1.3" height="1.3" fill="#2a2a2a"/><rect x="51.0" y="122.0" width="1.3" height="1.3" fill="#2a2a2a"/><rect x="59.5" y="122.0" width="1.3" height="1.3" fill="#2a2a2a"/><rect x="68.0" y="122.0" width="1.3" height="1.3" fill="#2a2a2a"/><rect x="76.5" y="122.0" width="1.3" height="1.3" fill="#2a2a2a"/><rect x="85.0" y="122.0" width="1.3" height="1.3" fill="#2a2a2a"/><rect x="93.5" y="122.0" width="1.3" height="1.3" fill="#2a2a2a"/><rect x="102.0" y="122.0" width="1.3" height="1.3" fill="#2a2a2a"/><rect x="110.5" y="122.0" width="1.3" height="1.3" fill="#2a2a2a"/><rect x="119.0" y="122.0" width="1.3" height="1.3" fill="#2a2a2a"/><rect x="127.5" y="122.0" width="1.3" height="1.3" fill="#2a2a2a"/><rect x="136.0" y="122.0" width="1.3" height="1.3" fill="#2a2a2a"/><rect x="144.5" y="122.0" width="1.3" height="1.3" fill="#2a2a2a"/><rect x="153.0" y="122.0" width="1.3" height="1.3" fill="#2a2a2a"/><rect x="161.5" y="122.0" width="1.3" height="1.3" fill="#2a2a2a"/><rect x="170.0" y="122.0" width="1.3" height="1.3" fill="#2a2a2a"/><rect x="178.5" y="122.0" width="1.3" height="1.3" fill="#2a2a2a"/><rect x="187.0" y="122.0" width="1.3" height="1.3" fill="#2a2a2a"/><rect x="195.5" y="122.0" width="1.3" height="1.3" fill="#2a2a2a"/><rect x="204.0" y="122.0" width="1.3" height="1.3" fill="#2a2a2a"/><rect x="212.5" y="122.0" width="1.3" height="1.3" fill="#2a2a2a"/><rect x="221.0" y="122.0" width="1.3" height="1.3" fill="#2a2a2a"/><rect x="229.5" y="122.0" width="1.3" height="1.3" fill="#2a2a2a"/><rect x="238.0" y="122.0" width="1.3" height="1.3" fill="#2a2a2a"/><rect x="246.5" y="122.0" width="1.3" height="1.3" fill="#2a2a2a"/><rect x="255.0" y="122.0" width="1.3" height="1.3" fill="#2a2a2a"/><rect x="263.5" y="122.0" width="1.3" height="1.3" fill="#2a2a2a"/><rect x="272.0" y="122.0" width="1.3" height="1.3" fill="#2a2a2a"/><rect x="280.5" y="122.0" width="1.3" height="1.3" fill="#2a2a2a"/><rect x="289.0" y="122.0" width="1.3" height="1.3" fill="#2a2a2a"/><rect x="297.5" y="122.0" width="1.3" height="1.3" fill="#2a2a2a"/><rect x="306.0" y="122.0" width="1.3" height="1.3" fill="#2a2a2a"/><rect x="314.5" y="122.0" width="1.3" height="1.3" fill="#2a2a2a"/><rect x="323.0" y="122.0" width="1.3" height="1.3" fill="#2a2a2a"/><rect x="331.5" y="122.0" width="1.3" height="1.3" fill="#2a2a2a"/><rect x="340.0" y="122.0" width="1.3" height="1.3" fill="#2a2a2a"/><rect x="348.5" y="122.0" width="1.3" height="1.3" fill="#2a2a2a"/><rect x="357.0" y="122.0" width="1.3" height="1.3" fill="#2a2a2a"/><rect x="365.5" y="122.0" width="1.3" height="1.3" fill="#2a2a2a"/><rect x="374.0" y="122.0" width="1.3" height="1.3" fill="#2a2a2a"/><rect x="382.5" y="122.0" width="1.3" height="1.3" fill="#2a2a2a"/><rect x="391.0" y="122.0" width="1.3" height="1.3" fill="#2a2a2a"/><rect x="399.5" y="122.0" width="1.3" height="1.3" fill="#2a2a2a"/><rect x="408.0" y="122.0" width="1.3" height="1.3" fill="#2a2a2a"/><rect x="416.5" y="122.0" width="1.3" height="1.3" fill="#2a2a2a"/><rect x="425.0" y="122.0" width="1.3" height="1.3" fill="#2a2a2a"/><rect x="433.5" y="122.0" width="1.3" height="1.3" fill="#2a2a2a"/><rect x="442.0" y="122.0" width="1.3" height="1.3" fill="#2a2a2a"/><rect x="450.5" y="122.0" width="1.3" height="1.3" fill="#2a2a2a"/><rect x="34.0" y="28.5" width="1.3" height="1.3" fill="#2a2a2a"/><rect x="34.0" y="37.0" width="1.3" height="1.3" fill="#2a2a2a"/><rect x="34.0" y="45.5" width="1.3" height="1.3" fill="#2a2a2a"/><rect x="34.0" y="62.5" width="1.3" height="1.3" fill="#2a2a2a"/><rect x="34.0" y="71.0" width="1.3" height="1.3" fill="#2a2a2a"/><rect x="34.0" y="79.5" width="1.3" height="1.3" fill="#2a2a2a"/><rect x="34.0" y="96.5" width="1.3" height="1.3" fill="#2a2a2a"/><rect x="34.0" y="105.0" width="1.3" height="1.3" fill="#2a2a2a"/><rect x="34.0" y="113.5" width="1.3" height="1.3" fill="#2a2a2a"/><rect x="34.0" y="130.5" width="1.3" height="1.3" fill="#2a2a2a"/><rect x="34.0" y="139.0" width="1.3" height="1.3" fill="#2a2a2a"/><rect x="34.0" y="147.5" width="1.3" height="1.3" fill="#2a2a2a"/><rect x="68.0" y="28.5" width="1.3" height="1.3" fill="#2a2a2a"/><rect x="68.0" y="37.0" width="1.3" height="1.3" fill="#2a2a2a"/><rect x="68.0" y="45.5" width="1.3" height="1.3" fill="#2a2a2a"/><rect x="68.0" y="62.5" width="1.3" height="1.3" fill="#2a2a2a"/><rect x="68.0" y="71.0" width="1.3" height="1.3" fill="#2a2a2a"/><rect x="68.0" y="79.5" width="1.3" height="1.3" fill="#2a2a2a"/><rect x="68.0" y="96.5" width="1.3" height="1.3" fill="#2a2a2a"/><rect x="68.0" y="105.0" width="1.3" height="1.3" fill="#2a2a2a"/><rect x="68.0" y="113.5" width="1.3" height="1.3" fill="#2a2a2a"/><rect x="68.0" y="130.5" width="1.3" height="1.3" fill="#2a2a2a"/><rect x="68.0" y="139.0" width="1.3" height="1.3" fill="#2a2a2a"/><rect x="68.0" y="147.5" width="1.3" height="1.3" fill="#2a2a2a"/><rect x="102.0" y="28.5" width="1.3" height="1.3" fill="#2a2a2a"/><rect x="102.0" y="37.0" width="1.3" height="1.3" fill="#2a2a2a"/><rect x="102.0" y="45.5" width="1.3" height="1.3" fill="#2a2a2a"/><rect x="102.0" y="62.5" width="1.3" height="1.3" fill="#2a2a2a"/><rect x="102.0" y="71.0" width="1.3" height="1.3" fill="#2a2a2a"/><rect x="102.0" y="79.5" width="1.3" height="1.3" fill="#2a2a2a"/><rect x="102.0" y="96.5" width="1.3" height="1.3" fill="#2a2a2a"/><rect x="102.0" y="105.0" width="1.3" height="1.3" fill="#2a2a2a"/><rect x="102.0" y="113.5" width="1.3" height="1.3" fill="#2a2a2a"/><rect x="102.0" y="130.5" width="1.3" height="1.3" fill="#2a2a2a"/><rect x="102.0" y="139.0" width="1.3" height="1.3" fill="#2a2a2a"/><rect x="102.0" y="147.5" width="1.3" height="1.3" fill="#2a2a2a"/><rect x="136.0" y="28.5" width="1.3" height="1.3" fill="#2a2a2a"/><rect x="136.0" y="37.0" width="1.3" height="1.3" fill="#2a2a2a"/><rect x="136.0" y="45.5" width="1.3" height="1.3" fill="#2a2a2a"/><rect x="136.0" y="62.5" width="1.3" height="1.3" fill="#2a2a2a"/><rect x="136.0" y="71.0" width="1.3" height="1.3" fill="#2a2a2a"/><rect x="136.0" y="79.5" width="1.3" height="1.3" fill="#2a2a2a"/><rect x="136.0" y="96.5" width="1.3" height="1.3" fill="#2a2a2a"/><rect x="136.0" y="105.0" width="1.3" height="1.3" fill="#2a2a2a"/><rect x="136.0" y="113.5" width="1.3" height="1.3" fill="#2a2a2a"/><rect x="136.0" y="130.5" width="1.3" height="1.3" fill="#2a2a2a"/><rect x="136.0" y="139.0" width="1.3" height="1.3" fill="#2a2a2a"/><rect x="136.0" y="147.5" width="1.3" height="1.3" fill="#2a2a2a"/><rect x="170.0" y="28.5" width="1.3" height="1.3" fill="#2a2a2a"/><rect x="170.0" y="37.0" width="1.3" height="1.3" fill="#2a2a2a"/><rect x="170.0" y="45.5" width="1.3" height="1.3" fill="#2a2a2a"/><rect x="170.0" y="62.5" width="1.3" height="1.3" fill="#2a2a2a"/><rect x="170.0" y="71.0" width="1.3" height="1.3" fill="#2a2a2a"/><rect x="170.0" y="79.5" width="1.3" height="1.3" fill="#2a2a2a"/><rect x="170.0" y="96.5" width="1.3" height="1.3" fill="#2a2a2a"/><rect x="170.0" y="105.0" width="1.3" height="1.3" fill="#2a2a2a"/><rect x="170.0" y="113.5" width="1.3" height="1.3" fill="#2a2a2a"/><rect x="170.0" y="130.5" width="1.3" height="1.3" fill="#2a2a2a"/><rect x="170.0" y="139.0" width="1.3" height="1.3" fill="#2a2a2a"/><rect x="170.0" y="147.5" width="1.3" height="1.3" fill="#2a2a2a"/><rect x="204.0" y="28.5" width="1.3" height="1.3" fill="#2a2a2a"/><rect x="204.0" y="37.0" width="1.3" height="1.3" fill="#2a2a2a"/><rect x="204.0" y="45.5" width="1.3" height="1.3" fill="#2a2a2a"/><rect x="204.0" y="62.5" width="1.3" height="1.3" fill="#2a2a2a"/><rect x="204.0" y="71.0" width="1.3" height="1.3" fill="#2a2a2a"/><rect x="204.0" y="79.5" width="1.3" height="1.3" fill="#2a2a2a"/><rect x="204.0" y="96.5" width="1.3" height="1.3" fill="#2a2a2a"/><rect x="204.0" y="105.0" width="1.3" height="1.3" fill="#2a2a2a"/><rect x="204.0" y="113.5" width="1.3" height="1.3" fill="#2a2a2a"/><rect x="204.0" y="130.5" width="1.3" height="1.3" fill="#2a2a2a"/><rect x="204.0" y="139.0" width="1.3" height="1.3" fill="#2a2a2a"/><rect x="204.0" y="147.5" width="1.3" height="1.3" fill="#2a2a2a"/><rect x="238.0" y="28.5" width="1.3" height="1.3" fill="#2a2a2a"/><rect x="238.0" y="37.0" width="1.3" height="1.3" fill="#2a2a2a"/><rect x="238.0" y="45.5" width="1.3" height="1.3" fill="#2a2a2a"/><rect x="238.0" y="62.5" width="1.3" height="1.3" fill="#2a2a2a"/><rect x="238.0" y="71.0" width="1.3" height="1.3" fill="#2a2a2a"/><rect x="238.0" y="79.5" width="1.3" height="1.3" fill="#2a2a2a"/><rect x="238.0" y="96.5" width="1.3" height="1.3" fill="#2a2a2a"/><rect x="238.0" y="105.0" width="1.3" height="1.3" fill="#2a2a2a"/><rect x="238.0" y="113.5" width="1.3" height="1.3" fill="#2a2a2a"/><rect x="238.0" y="130.5" width="1.3" height="1.3" fill="#2a2a2a"/><rect x="238.0" y="139.0" width="1.3" height="1.3" fill="#2a2a2a"/><rect x="238.0" y="147.5" width="1.3" height="1.3" fill="#2a2a2a"/><rect x="272.0" y="28.5" width="1.3" height="1.3" fill="#2a2a2a"/><rect x="272.0" y="37.0" width="1.3" height="1.3" fill="#2a2a2a"/><rect x="272.0" y="45.5" width="1.3" height="1.3" fill="#2a2a2a"/><rect x="272.0" y="62.5" width="1.3" height="1.3" fill="#2a2a2a"/><rect x="272.0" y="71.0" width="1.3" height="1.3" fill="#2a2a2a"/><rect x="272.0" y="79.5" width="1.3" height="1.3" fill="#2a2a2a"/><rect x="272.0" y="96.5" width="1.3" height="1.3" fill="#2a2a2a"/><rect x="272.0" y="105.0" width="1.3" height="1.3" fill="#2a2a2a"/><rect x="272.0" y="113.5" width="1.3" height="1.3" fill="#2a2a2a"/><rect x="272.0" y="130.5" width="1.3" height="1.3" fill="#2a2a2a"/><rect x="272.0" y="139.0" width="1.3" height="1.3" fill="#2a2a2a"/><rect x="272.0" y="147.5" width="1.3" height="1.3" fill="#2a2a2a"/><rect x="306.0" y="28.5" width="1.3" height="1.3" fill="#2a2a2a"/><rect x="306.0" y="37.0" width="1.3" height="1.3" fill="#2a2a2a"/><rect x="306.0" y="45.5" width="1.3" height="1.3" fill="#2a2a2a"/><rect x="306.0" y="62.5" width="1.3" height="1.3" fill="#2a2a2a"/><rect x="306.0" y="71.0" width="1.3" height="1.3" fill="#2a2a2a"/><rect x="306.0" y="79.5" width="1.3" height="1.3" fill="#2a2a2a"/><rect x="306.0" y="96.5" width="1.3" height="1.3" fill="#2a2a2a"/><rect x="306.0" y="105.0" width="1.3" height="1.3" fill="#2a2a2a"/><rect x="306.0" y="113.5" width="1.3" height="1.3" fill="#2a2a2a"/><rect x="306.0" y="130.5" width="1.3" height="1.3" fill="#2a2a2a"/><rect x="306.0" y="139.0" width="1.3" height="1.3" fill="#2a2a2a"/><rect x="306.0" y="147.5" width="1.3" height="1.3" fill="#2a2a2a"/><rect x="340.0" y="28.5" width="1.3" height="1.3" fill="#2a2a2a"/><rect x="340.0" y="37.0" width="1.3" height="1.3" fill="#2a2a2a"/><rect x="340.0" y="45.5" width="1.3" height="1.3" fill="#2a2a2a"/><rect x="340.0" y="62.5" width="1.3" height="1.3" fill="#2a2a2a"/><rect x="340.0" y="71.0" width="1.3" height="1.3" fill="#2a2a2a"/><rect x="340.0" y="79.5" width="1.3" height="1.3" fill="#2a2a2a"/><rect x="340.0" y="96.5" width="1.3" height="1.3" fill="#2a2a2a"/><rect x="340.0" y="105.0" width="1.3" height="1.3" fill="#2a2a2a"/><rect x="340.0" y="113.5" width="1.3" height="1.3" fill="#2a2a2a"/><rect x="340.0" y="130.5" width="1.3" height="1.3" fill="#2a2a2a"/><rect x="340.0" y="139.0" width="1.3" height="1.3" fill="#2a2a2a"/><rect x="340.0" y="147.5" width="1.3" height="1.3" fill="#2a2a2a"/><rect x="374.0" y="28.5" width="1.3" height="1.3" fill="#2a2a2a"/><rect x="374.0" y="37.0" width="1.3" height="1.3" fill="#2a2a2a"/><rect x="374.0" y="45.5" width="1.3" height="1.3" fill="#2a2a2a"/><rect x="374.0" y="62.5" width="1.3" height="1.3" fill="#2a2a2a"/><rect x="374.0" y="71.0" width="1.3" height="1.3" fill="#2a2a2a"/><rect x="374.0" y="79.5" width="1.3" height="1.3" fill="#2a2a2a"/><rect x="374.0" y="96.5" width="1.3" height="1.3" fill="#2a2a2a"/><rect x="374.0" y="105.0" width="1.3" height="1.3" fill="#2a2a2a"/><rect x="374.0" y="113.5" width="1.3" height="1.3" fill="#2a2a2a"/><rect x="374.0" y="130.5" width="1.3" height="1.3" fill="#2a2a2a"/><rect x="374.0" y="139.0" width="1.3" height="1.3" fill="#2a2a2a"/><rect x="374.0" y="147.5" width="1.3" height="1.3" fill="#2a2a2a"/><rect x="408.0" y="28.5" width="1.3" height="1.3" fill="#2a2a2a"/><rect x="408.0" y="37.0" width="1.3" height="1.3" fill="#2a2a2a"/><rect x="408.0" y="45.5" width="1.3" height="1.3" fill="#2a2a2a"/><rect x="408.0" y="62.5" width="1.3" height="1.3" fill="#2a2a2a"/><rect x="408.0" y="71.0" width="1.3" height="1.3" fill="#2a2a2a"/><rect x="408.0" y="79.5" width="1.3" height="1.3" fill="#2a2a2a"/><rect x="408.0" y="96.5" width="1.3" height="1.3" fill="#2a2a2a"/><rect x="408.0" y="105.0" width="1.3" height="1.3" fill="#2a2a2a"/><rect x="408.0" y="113.5" width="1.3" height="1.3" fill="#2a2a2a"/><rect x="408.0" y="130.5" width="1.3" height="1.3" fill="#2a2a2a"/><rect x="408.0" y="139.0" width="1.3" height="1.3" fill="#2a2a2a"/><rect x="408.0" y="147.5" width="1.3" height="1.3" fill="#2a2a2a"/><rect x="442.0" y="28.5" width="1.3" height="1.3" fill="#2a2a2a"/><rect x="442.0" y="37.0" width="1.3" height="1.3" fill="#2a2a2a"/><rect x="442.0" y="45.5" width="1.3" height="1.3" fill="#2a2a2a"/><rect x="442.0" y="62.5" width="1.3" height="1.3" fill="#2a2a2a"/><rect x="442.0" y="71.0" width="1.3" height="1.3" fill="#2a2a2a"/><rect x="442.0" y="79.5" width="1.3" height="1.3" fill="#2a2a2a"/><rect x="442.0" y="96.5" width="1.3" height="1.3" fill="#2a2a2a"/><rect x="442.0" y="105.0" width="1.3" height="1.3" fill="#2a2a2a"/><rect x="442.0" y="113.5" width="1.3" height="1.3" fill="#2a2a2a"/><rect x="442.0" y="130.5" width="1.3" height="1.3" fill="#2a2a2a"/><rect x="442.0" y="139.0" width="1.3" height="1.3" fill="#2a2a2a"/><rect x="442.0" y="147.5" width="1.3" height="1.3" fill="#2a2a2a"/></svg><div class="r" style="left:514px;top:116px;width:1px;height:360px;background:#111;"></div><div class="r" style="left:515px;top:116px;width:180px;height:48px;background:#222222;"></div><div class="r" style="left:515px;top:164px;width:180px;height:148px;background:#474747;"></div><div class="r" style="left:695px;top:116px;width:1px;height:360px;background:#111;"></div><div class="t" style="left:527.4px;top:133.94px;font-size:13.3px;color:#ffffff;font-weight:700;font-family:'Liberation Sans', sans-serif;">Visualizations</div><svg class="r" style="left:674px;top:133px;" width="10" height="14" viewBox="0 0 10 14"><path d="M2 1.5 L8 7 L2 12.5" fill="none" stroke="#c8c8c8" stroke-width="1.3"/></svg><svg class="r" style="left:524px;top:169px;" width="19" height="19" viewBox="0 0 19 19"><path d="M0.5 0 V17.5 H18" fill="none" stroke="#9a9a9a" stroke-width="1"/><rect x="1" y="3" width="4" height="5" fill="#bdbdbd"/><rect x="5" y="3" width="8" height="5" fill="#f0923c"/><rect x="1" y="10" width="7" height="5" fill="#bdbdbd"/><rect x="8" y="10" width="8" height="5" fill="#f0923c"/></svg><svg class="r" style="left:552px;top:169px;" width="19" height="19" viewBox="0 0 19 19"><path d="M0.5 0 V17.5 H18" fill="none" stroke="#9a9a9a" stroke-width="1"/><rect x="3" y="5" width="5" height="8" fill="#f0923c"/><rect x="3" y="13" width="5" height="5" fill="#bdbdbd"/><rect x="10" y="2" width="5" height="8" fill="#f0923c"/><rect x="10" y="10" width="5" height="8" fill="#bdbdbd"/></svg><svg class="r" style="left:580px;top:169px;" width="19" height="19" viewBox="0 0 19 19"><path d="M0.5 0 V17.5 H18" fill="none" stroke="#9a9a9a" stroke-width="1"/><rect x="1" y="2" width="10" height="3" fill="#f0c674"/><rect x="1" y="5" width="16" height="3" fill="#9cc0e6"/><rect x="1" y="10" width="12" height="3" fill="#f0c674"/><rect x="1" y="13" width="9" height="3" fill="#9cc0e6"/></svg><svg class="r" style="left:608px;top:169px;" width="19" height="19" viewBox="0 0 19 19"><path d="M0.5 0 V17.5 H18" fill="none" stroke="#9a9a9a" stroke-width="1"/><rect x="2.5" y="8" width="3" height="10" fill="#f0c674"/><rect x="5.5" y="1" width="3" height="17" fill="#9cc0e6"/><rect x="10" y="4" width="3" height="14" fill="#f0c674"/><rect x="13" y="7" width="3" height="11" fill="#9cc0e6"/></svg><svg class="r" style="left:636px;top:169px;" width="19" height="19" viewBox="0 0 19 19"><path d="M0.5 0 V17.5 H18" fill="none" stroke="#9a9a9a" stroke-width="1"/><rect x="1" y="3" width="7" height="5" fill="#8a8a8a"/><rect x="8" y="3" width="9" height="5" fill="#9cc0e6"/><rect x="1" y="10" width="9" height="5" fill="#8a8a8a"/><rect x="10" y="10" width="7" height="5" fill="#9cc0e6"/></svg><svg class="r" style="left:664px;top:169px;" width="19" height="19" viewBox="0 0 19 19"><path d="M0.5 0 V17.5 H18" fill="none" stroke="#9a9a9a" stroke-width="1"/><rect x="3" y="1" width="5" height="8" fill="#9cc0e6"/><rect x="3" y="9" width="5" height="9" fill="#8a8a8a"/><rect x="10" y="1" width="5" height="10" fill="#9cc0e6"/><rect x="10" y="11" width="5" height="7" fill="#8a8a8a"/></svg><svg class="r" style="left:524px;top:193px;" width="19" height="19" viewBox="0 0 19 19"><path d="M0.5 0 V17.5 H18" fill="none" stroke="#9a9a9a" stroke-width="1"/><path d="M1 16 L8 9 L12 4 L17 10" fill="none" stroke="#e9a590" stroke-width="1.2" stroke-dasharray="1.5 0.8"/><path d="M1 10 L5 6 L10 11 L17 4" fill="none" stroke="#4a8ad0" stroke-width="1.3"/></svg><svg class="r" style="left:552px;top:193px;" width="19" height="19" viewBox="0 0 19 19"><path d="M0.5 0 V17.5 H18" fill="none" stroke="#9a9a9a" stroke-width="1"/><path d="M1 18 V7 L5 4 L10 8 L15 3 L18 3 V18 Z" fill="#bdbdbd"/><path d="M1 8 L5 5 L9 8 L13 5 L18 3 V14 L13 12 L8 10 L1 11 Z" fill="#f0c674" opacity="0.9"/><path d="M9 8 L14 4 L18 3 V13 L13 12 Z" fill="#f0923c"/><path d="M1 9 L5 8 L8 10 L4 12 L1 11 Z" fill="#9cc0e6"/></svg><svg class="r" style="left:580px;top:193px;" width="19" height="19" viewBox="0 0 19 19"><path d="M0.5 0 V17.5 H18" fill="none" stroke="#9a9a9a" stroke-width="1"/><path d="M1 5 L5 1.5 L9 5 L13 1.5 L17 5 V17 H1 Z" fill="#f0c674"/><path d="M1 8.5 L5 11 L10 6 L14 10.5 L17 8.5 V13 L14 15.5 L10 11.5 L5 15.5 L1 12.5 Z" fill="#4a8ad0"/><path d="M1 17 V13 L4 10 L9 14 L10 13.5 L14 16 L17 12.5 V17 Z" fill="#f0923c"/></svg><svg class="r" style="left:608px;top:193px;" width="19" height="19" viewBox="0 0 19 19"><path d="M0.5 0 V17.5 H18" fill="none" stroke="#9a9a9a" stroke-width="1"/><path d="M17.5 0 V17.5" stroke="#f0923c" stroke-width="1"/><rect x="4" y="3" width="4" height="15" fill="#f0923c"/><rect x="4" y="11" width="4" height="7" fill="#bdbdbd"/><rect x="10" y="7" width="4" height="11" fill="#f0923c"/><rect x="10" y="12" width="4" height="6" fill="#bdbdbd"/><path d="M1 14 L5 10 L9 12 L13 9 L17 8" fill="none" stroke="#d9582c" stroke-width="1.2"/></svg><svg class="r" style="left:636px;top:193px;" width="19" height="19" viewBox="0 0 19 19"><path d="M0.5 0 V17.5 H18" fill="none" stroke="#9a9a9a" stroke-width="1"/><path d="M17.5 0 V17.5" stroke="#f0923c" stroke-width="1"/><rect x="3" y="7" width="3" height="11" fill="#f0c674"/><rect x="6" y="2" width="3" height="16" fill="#9cc0e6"/><rect x="10" y="5" width="3" height="13" fill="#f0c674"/><rect x="13" y="8" width="3" height="10" fill="#9cc0e6"/><path d="M1 13 L5 10 L9 13 L13 10 L17 9" fill="none" stroke="#d9582c" stroke-width="1.2"/></svg><svg class="r" style="left:664px;top:193px;" width="19" height="19" viewBox="0 0 19 19"><path d="M0.5 0 V17.5 H18" fill="none" stroke="#9a9a9a" stroke-width="1"/><rect x="3" y="4" width="2.2" height="13" fill="#ddd"/><rect x="6" y="4" width="2.2" height="5" fill="#e85a32"/><rect x="8" y="9" width="3" height="4.6" fill="#e85a32"/><rect x="11" y="1" width="2.2" height="12.6" fill="#6fb39b"/><rect x="13.4" y="1" width="2.6" height="16" fill="#ddd"/></svg><svg class="r" style="left:524px;top:217px;" width="19" height="19" viewBox="0 0 19 19"><path d="M0.5 0 V17.5 H18" fill="none" stroke="#9a9a9a" stroke-width="1"/><circle cx="4.5" cy="5.3" r="1.6" fill="#e0583a"/><circle cx="12.5" cy="4.5" r="1.6" fill="#6fae96"/><circle cx="3.5" cy="11.5" r="1.6" fill="#4a8ad0"/><circle cx="9.5" cy="9.5" r="1.6" fill="#f0c674"/><circle cx="16.5" cy="9.5" r="1.6" fill="#4a8ad0"/><circle cx="13.5" cy="13.5" r="1.6" fill="#888"/></svg><svg class="r" style="left:552px;top:217px;" width="19" height="19" viewBox="0 0 19 19"><circle cx="8.3" cy="8.2" r="8.6" fill="#86abd8"/><path d="M8.3 8.2 L0.6 5.2 A8.6 8.6 0 0 1 8.3 -0.4 Z" fill="#f3dcaa"/><path d="M8.3 8.2 L1.6 13.6 A8.6 8.6 0 0 1 0.6 5.2 Z" fill="#eab2a2"/><path d="M8.3 8.2 L0.2 5 M8.3 8.2 V-0.6 M8.3 8.2 L1.4 13.8" stroke="#474747" stroke-width="0.9"/></svg><svg class="r" style="left:580px;top:217px;" width="19" height="19" viewBox="0 0 19 19"><rect x="0" y="0" width="18" height="18" fill="#cfcfcf"/><rect x="1" y="1" width="3" height="4.5" fill="#fff"/><rect x="1" y="6.5" width="3" height="3.5" fill="#fff"/><rect x="5" y="1" width="9" height="4" fill="#c6dbf2"/><rect x="5" y="6" width="9" height="4" fill="#c6dbf2"/><rect x="15" y="1" width="2" height="9" fill="#c6dbf2"/><rect x="1" y="11" width="7" height="6" fill="#fff"/><rect x="9" y="11" width="8" height="6" fill="#fff"/></svg><svg class="r" style="left:608px;top:217px;" width="19" height="19" viewBox="0 0 19 19"><circle cx="9" cy="8.8" r="8" fill="#ffffff" stroke="#4a7fbf" stroke-width="1.6"/><path d="M1.5 6.5 H16.5 M1.5 11 H16.5 M9 1 V16.5 M5.5 1.8 Q2.5 8.8 5.5 15.8 M12.5 1.8 Q15.5 8.8 12.5 15.8" fill="none" stroke="#7fb8a0" stroke-width="1"/></svg><svg class="r" style="left:636px;top:217px;" width="19" height="19" viewBox="0 0 19 19"><rect x="1" y="1" width="16" height="17.5" fill="#c8c8c8"/><rect x="1" y="1" width="16" height="2.5" fill="#4a7fc0"/><rect x="2" y="4.5" width="4" height="3.5" fill="#fff"/><rect x="2" y="9.0" width="4" height="3.5" fill="#fff"/><rect x="2" y="13.5" width="4" height="3.5" fill="#fff"/><rect x="7" y="4.5" width="4" height="3.5" fill="#fff"/><rect x="7" y="9.0" width="4" height="3.5" fill="#fff"/><rect x="7" y="13.5" width="4" height="3.5" fill="#fff"/><rect x="12" y="4.5" width="4" height="3.5" fill="#fff"/><rect x="12" y="9.0" width="4" height="3.5" fill="#fff"/><rect x="12" y="13.5" width="4" height="3.5" fill="#fff"/></svg><svg class="r" style="left:664px;top:217px;" width="19" height="19" viewBox="0 0 19 19"><rect x="1" y="1" width="16" height="17.5" fill="#c8c8c8"/><rect x="1" y="1" width="16" height="2.5" fill="#4a7fc0"/><rect x="2" y="4.5" width="4" height="3.5" fill="#fff"/><rect x="2" y="9.0" width="4" height="3.5" fill="#fff"/><rect x="2" y="13.5" width="4" height="3.5" fill="#d3e0ef"/><rect x="7" y="4.5" width="4" height="3.5" fill="#fff"/><rect x="7" y="9.0" width="4" height="3.5" fill="#fff"/><rect x="7" y="13.5" width="4" height="3.5" fill="#d3e0ef"/><rect x="12" y="4.5" width="4" height="3.5" fill="#d3e0ef"/><rect x="12" y="9.0" width="4" height="3.5" fill="#d3e0ef"/><rect x="12" y="13.5" width="4" height="3.5" fill="#d3e0ef"/></svg><svg class="r" style="left:524px;top:241px;" width="19" height="19" viewBox="0 0 19 19"><path d="M0 2 H14 V5 H4 Z" fill="#cfcfcf"/><path d="M1 6 L2 5 L4 6 H7 V9.6 H0 Z" fill="#4a8ad0"/><path d="M7.5 6 H14.7 V9.6 H8.5 Z" fill="#cfcfcf"/><path d="M15 1 H18 V10.6 H15 Z" fill="#f0c674"/><path d="M0 11 H7.9 V15 L6 18 L4 15.5 L2 14 Z" fill="#d5d5d5"/><path d="M8.3 11 H17 V15 L15 16.7 H9 Z" fill="#9cc0e6"/></svg><svg class="r" style="left:552px;top:241px;" width="19" height="19" viewBox="0 0 19 19"><rect x="0" y="2" width="18" height="3" fill="#9cc0e6"/><rect x="2" y="6" width="14" height="3" fill="#f0c674"/><rect x="3.8" y="10" width="10.2" height="3" fill="#9cc0e6"/><rect x="6" y="14" width="6" height="3" fill="#9cc0e6"/></svg><svg class="r" style="left:580px;top:241px;" width="19" height="19" viewBox="0 0 19 19"><path d="M1.5 13.5 A7.6 7.6 0 0 1 14.9 8.1" fill="none" stroke="#f0c674" stroke-width="3.5"/><path d="M14.9 8.1 A7.6 7.6 0 0 1 16.7 13.5" fill="none" stroke="#6fae96" stroke-width="3.5"/><path d="M8 13.5 L12.5 9.5" stroke="#303030" stroke-width="1.8"/></svg><svg class="r" style="left:608px;top:241px;" width="19" height="19" viewBox="0 0 19 19"><rect x="0.5" y="0.5" width="18" height="18" fill="#fff" stroke="#c8c8c8"/><rect x="3" y="2" width="2.5" height="15" fill="#aaa"/><rect x="7" y="3" width="5" height="2" fill="#9cc0e6"/><rect x="7" y="6" width="3" height="1" fill="#aaa"/><rect x="7" y="9" width="5" height="2" fill="#9cc0e6"/><rect x="7" y="12" width="3" height="1" fill="#aaa"/></svg><svg class="r" style="left:636px;top:241px;" width="19" height="19" viewBox="0 0 19 19"><rect x="0.5" y="2.5" width="18" height="14" fill="#fff" stroke="#c8c8c8"/><text x="9.5" y="11.5" font-family="Liberation Sans" font-size="9.5" font-weight="700" fill="#4a7fc0" text-anchor="middle">123</text><rect x="3" y="13" width="13" height="1" fill="#555"/></svg><svg class="r" style="left:664px;top:241px;" width="19" height="19" viewBox="0 0 19 19"><rect x="0.5" y="2.5" width="18" height="14" fill="#fff" stroke="#c8c8c8"/><path d="M4 10 L6.5 6 L9 10 Z" fill="#6fae96"/><path d="M10 6 H15 L12.5 10 Z" fill="#e0552c"/><rect x="3" y="13" width="13" height="1" fill="#555"/></svg><svg class="r" style="left:524px;top:265px;" width="19" height="19" viewBox="0 0 19 19"><rect x="0" y="0" width="19" height="19" fill="#c8c8c8"/><rect x="0" y="0" width="19" height="3" fill="#4a7fc0"/><rect x="1" y="4" width="15" height="14" fill="#fff"/><rect x="3" y="6" width="2.5" height="2.5" fill="#9cc0e6"/><rect x="3" y="10" width="2.5" height="2.5" fill="#f0c674"/><rect x="3" y="14" width="2.5" height="2.5" fill="#e9a590"/><path d="M9 10 H19 L15.5 14 V19 H12.5 V14 Z" fill="#7a7a7a" stroke="#474747" stroke-width="0.8"/></svg><svg class="r" style="left:552px;top:265px;" width="19" height="19" viewBox="0 0 19 19"><circle cx="9.5" cy="9.5" r="6.8" fill="none" stroke="#4a7fbf" stroke-width="3.6"/><path d="M9.5 2.7 A6.8 6.8 0 0 1 16 7.5" fill="none" stroke="#f0c674" stroke-width="3.6"/><path d="M9.5 0 V5 M17 6 L13 8.5 M14 16 L11.5 12.5 M3 15 L7 12 M2 5 L6 7.5" stroke="#474747" stroke-width="0.9"/></svg><svg class="r" style="left:580px;top:265px;" width="19" height="19" viewBox="0 0 19 19"><text x="9.5" y="18" font-family="Liberation Sans" font-size="21" font-weight="700" fill="#7ea7d6" text-anchor="middle">R</text></svg><svg class="r" style="left:608px;top:265px;" width="19" height="19" viewBox="0 0 19 19"><path d="M0.5 1.5 L6 0.5 L12 1.5 L17.5 0.5 V16.5 L12 17.5 L6 16.5 L0.5 17.5 Z" fill="#4a7fbf" stroke="#9cc0e6" stroke-width="1"/><path d="M2 2 H11 V5 H16 V8 H9 V6 H2 Z" fill="#3a5f88"/><path d="M3 7 H8 V11 H3 Z M10 12 H16 V15 H10 Z" fill="#2f4a6a"/><path d="M2 6.5 H16 M8.5 7 V17 M2 11.5 H16" fill="none" stroke="#9cc0e6" stroke-width="0.8"/></svg><svg class="r" style="left:636px;top:265px;" width="19" height="19" viewBox="0 0 19 19"><rect x="1" y="1" width="16" height="17.5" fill="#c8c8c8"/><rect x="1" y="1" width="16" height="2.5" fill="#4a7fc0"/><rect x="2" y="4.5" width="4" height="3.5" fill="#fff"/><rect x="2" y="9.0" width="4" height="3.5" fill="#fff"/><rect x="2" y="13.5" width="4" height="3.5" fill="#fff"/><rect x="7" y="4.5" width="4" height="3.5" fill="#fff"/><rect x="7" y="9.0" width="4" height="3.5" fill="#fff"/><rect x="7" y="13.5" width="4" height="3.5" fill="#fff"/><rect x="12" y="4.5" width="4" height="3.5" fill="#fff"/><rect x="12" y="9.0" width="4" height="3.5" fill="#fff"/><rect x="12" y="13.5" width="4" height="3.5" fill="#fff"/></svg><svg class="r" style="left:664px;top:265px;" width="19" height="19" viewBox="0 0 19 19"><rect x="1" y="1" width="16" height="17.5" fill="#c8c8c8"/><rect x="1" y="1" width="16" height="2.5" fill="#4a7fc0"/><rect x="2" y="4.5" width="4" height="3.5" fill="#fff"/><rect x="2" y="9.0" width="4" height="3.5" fill="#fff"/><rect x="2" y="13.5" width="4" height="3.5" fill="#d3e0ef"/><rect x="7" y="4.5" width="4" height="3.5" fill="#fff"/><rect x="7" y="9.0" width="4" height="3.5" fill="#fff"/><rect x="7" y="13.5" width="4" height="3.5" fill="#d3e0ef"/><rect x="12" y="4.5" width="4" height="3.5" fill="#d3e0ef"/><rect x="12" y="9.0" width="4" height="3.5" fill="#d3e0ef"/><rect x="12" y="13.5" width="4" height="3.5" fill="#d3e0ef"/></svg><div class="r" style="left:527px;top:295.5px;width:2px;height:2px;background:#ffffff;"></div><div class="r" style="left:533px;top:295.5px;width:2px;height:2px;background:#ffffff;"></div><div class="r" style="left:539px;top:295.5px;width:2px;height:2px;background:#ffffff;"></div><div class="r" style="left:515px;top:312px;width:180px;height:36px;background:#222222;"></div><div class="r" style="left:527px;top:346px;width:36px;height:2px;background:#f2c811;"></div><svg class="r" style="left:533px;top:319px;" width="24" height="22" viewBox="0 0 24 22"><path d="M2 1.5 H18" stroke="#fff" stroke-width="1.3"/><rect x="2.5" y="4.5" width="19" height="6" rx="1" fill="none" stroke="#fff" stroke-width="1.3" stroke-dasharray="2 1.4"/><rect x="2.5" y="13.5" width="19" height="6.3" rx="1" fill="none" stroke="#fff" stroke-width="1.3" stroke-dasharray="2 1.4"/></svg><svg class="r" style="left:575px;top:319px;" width="20" height="22" viewBox="0 0 20 22"><rect x="1.5" y="1.7" width="14.5" height="4.6" rx="2" fill="none" stroke="#fff" stroke-width="1.3"/><path d="M16 3.5 H18.5 V8.6 H10 V11.5" fill="none" stroke="#fff" stroke-width="1.3"/><rect x="7.6" y="11.6" width="4.6" height="9.2" rx="0.8" fill="none" stroke="#fff" stroke-width="1.3"/></svg><div class="r" style="left:515px;top:348px;width:180px;height:60px;background:#474747;"></div><div class="t" style="left:527px;top:357.34px;font-size:12px;color:#b4b4b4;font-weight:400;font-family:'Liberation Sans', sans-serif;">Values</div><svg class="r" style="left:519px;top:376px;" width="170" height="28" viewBox="0 0 170 28"><rect x="0.5" y="0.5" width="169" height="27" rx="3" fill="none" stroke="#717171" stroke-width="1" stroke-dasharray="4 3.6"/></svg><div class="t" style="left:530px;top:385.34px;font-size:12px;color:#a0a0a0;font-weight:400;font-family:'Liberation Sans', sans-serif;">Drag data fields here</div><div class="r" style="left:515px;top:408px;width:180px;height:36px;background:#222222;"></div><div class="t" style="left:529.5px;top:423.12px;font-size:13.8px;color:#ffffff;font-weight:700;font-family:'Liberation Sans', sans-serif;">Filters</div><div class="r" style="left:515px;top:444px;width:180px;height:32px;background:#474747;"></div><div class="t" style="left:527px;top:456.68px;font-size:11.6px;color:#b4b4b4;font-weight:400;font-family:'Liberation Sans', sans-serif;">Page level filters</div><div class="r" style="left:696px;top:116px;width:202px;height:48px;background:#222222;"></div><div class="t" style="left:708.2px;top:134.04px;font-size:13.3px;color:#ffffff;font-weight:700;font-family:'Liberation Sans', sans-serif;">Fields</div><div class="r" style="left:696px;top:164px;width:202px;height:47px;background:#474747;"></div><div class="r" style="left:706px;top:171px;width:192px;height:30px;background:#222222;border:1px solid #111;box-sizing:border-box;"></div><svg class="r" style="left:716px;top:177px;" width="20" height="18" viewBox="0 0 20 18"><circle cx="12" cy="6.5" r="4.8" fill="none" stroke="#b0b0b0" stroke-width="1.3"/><path d="M8.5 10 L2 16.5" stroke="#b0b0b0" stroke-width="1.4"/></svg><div class="t" style="left:742px;top:181.39px;font-size:12.3px;color:#b4b4b4;font-weight:400;font-family:'Liberation Sans', sans-serif;">Search</div><div class="r" style="left:696px;top:211px;width:202px;height:1px;background:#1e1e1e;"></div><div class="r" style="left:696px;top:212px;width:202px;height:264px;background:#474747;"></div><svg class="r" style="left:707px;top:226px;" width="6" height="10" viewBox="0 0 6 10"><path d="M0.5 0.5 L5 5 L0.5 9.5 Z" fill="#9a9a9a"/></svg><svg class="r" style="left:721px;top:225px;" width="13" height="12" viewBox="0 0 13 12"><rect x="0" y="0" width="13" height="12" fill="#d8d8d8"/><rect x="1" y="3" width="3" height="2" fill="#474747"/><rect x="1" y="6" width="3" height="2" fill="#474747"/><rect x="1" y="9" width="3" height="2" fill="#474747"/><rect x="5" y="3" width="3" height="2" fill="#474747"/><rect x="5" y="6" width="3" height="2" fill="#474747"/><rect x="5" y="9" width="3" height="2" fill="#474747"/><rect x="9" y="3" width="3" height="2" fill="#474747"/><rect x="9" y="6" width="3" height="2" fill="#474747"/><rect x="9" y="9" width="3" height="2" fill="#474747"/></svg><div class="t" style="left:746.4px;top:226.83px;font-size:11.9px;color:#ffffff;font-weight:400;font-family:'Liberation Sans', sans-serif;">DimDate</div><svg class="r" style="left:707px;top:250px;" width="6" height="10" viewBox="0 0 6 10"><path d="M0.5 0.5 L5 5 L0.5 9.5 Z" fill="#9a9a9a"/></svg><svg class="r" style="left:721px;top:249px;" width="13" height="12" viewBox="0 0 13 12"><rect x="0" y="0" width="13" height="12" fill="#d8d8d8"/><rect x="1" y="3" width="3" height="2" fill="#474747"/><rect x="1" y="6" width="3" height="2" fill="#474747"/><rect x="1" y="9" width="3" height="2" fill="#474747"/><rect x="5" y="3" width="3" height="2" fill="#474747"/><rect x="5" y="6" width="3" height="2" fill="#474747"/><rect x="5" y="9" width="3" height="2" fill="#474747"/><rect x="9" y="3" width="3" height="2" fill="#474747"/><rect x="9" y="6" width="3" height="2" fill="#474747"/><rect x="9" y="9" width="3" height="2" fill="#474747"/></svg><div class="t" style="left:746.4px;top:250.83px;font-size:11.9px;color:#ffffff;font-weight:400;font-family:'Liberation Sans', sans-serif;">DimProduct</div><svg class="r" style="left:707px;top:274px;" width="6" height="10" viewBox="0 0 6 10"><path d="M0.5 0.5 L5 5 L0.5 9.5 Z" fill="#9a9a9a"/></svg><svg class="r" style="left:721px;top:273px;" width="13" height="12" viewBox="0 0 13 12"><rect x="0" y="0" width="13" height="12" fill="#d8d8d8"/><rect x="1" y="3" width="3" height="2" fill="#474747"/><rect x="1" y="6" width="3" height="2" fill="#474747"/><rect x="1" y="9" width="3" height="2" fill="#474747"/><rect x="5" y="3" width="3" height="2" fill="#474747"/><rect x="5" y="6" width="3" height="2" fill="#474747"/><rect x="5" y="9" width="3" height="2" fill="#474747"/><rect x="9" y="3" width="3" height="2" fill="#474747"/><rect x="9" y="6" width="3" height="2" fill="#474747"/><rect x="9" y="9" width="3" height="2" fill="#474747"/></svg><div class="t" style="left:746.4px;top:274.83px;font-size:11.9px;color:#ffffff;font-weight:400;font-family:'Liberation Sans', sans-serif;">DimProductCategory</div><svg class="r" style="left:707px;top:298px;" width="6" height="10" viewBox="0 0 6 10"><path d="M0.5 0.5 L5 5 L0.5 9.5 Z" fill="#9a9a9a"/></svg><svg class="r" style="left:721px;top:297px;" width="13" height="12" viewBox="0 0 13 12"><rect x="0" y="0" width="13" height="12" fill="#d8d8d8"/><rect x="1" y="3" width="3" height="2" fill="#474747"/><rect x="1" y="6" width="3" height="2" fill="#474747"/><rect x="1" y="9" width="3" height="2" fill="#474747"/><rect x="5" y="3" width="3" height="2" fill="#474747"/><rect x="5" y="6" width="3" height="2" fill="#474747"/><rect x="5" y="9" width="3" height="2" fill="#474747"/><rect x="9" y="3" width="3" height="2" fill="#474747"/><rect x="9" y="6" width="3" height="2" fill="#474747"/><rect x="9" y="9" width="3" height="2" fill="#474747"/></svg><div class="t" style="left:746.4px;top:298.83px;font-size:11.9px;color:#ffffff;font-weight:400;font-family:'Liberation Sans', sans-serif;">DimProductSubcategory</div><svg class="r" style="left:707px;top:322px;" width="6" height="10" viewBox="0 0 6 10"><path d="M0.5 0.5 L5 5 L0.5 9.5 Z" fill="#9a9a9a"/></svg><svg class="r" style="left:721px;top:321px;" width="13" height="12" viewBox="0 0 13 12"><rect x="0" y="0" width="13" height="12" fill="#d8d8d8"/><rect x="1" y="3" width="3" height="2" fill="#474747"/><rect x="1" y="6" width="3" height="2" fill="#474747"/><rect x="1" y="9" width="3" height="2" fill="#474747"/><rect x="5" y="3" width="3" height="2" fill="#474747"/><rect x="5" y="6" width="3" height="2" fill="#474747"/><rect x="5" y="9" width="3" height="2" fill="#474747"/><rect x="9" y="3" width="3" height="2" fill="#474747"/><rect x="9" y="6" width="3" height="2" fill="#474747"/><rect x="9" y="9" width="3" height="2" fill="#474747"/></svg><div class="t" style="left:746.4px;top:322.83px;font-size:11.9px;color:#ffffff;font-weight:400;font-family:'Liberation Sans', sans-serif;letter-spacing:-0.36px;">DimSalesReason</div><svg class="r" style="left:705px;top:348px;" width="8" height="8" viewBox="0 0 8 8"><path d="M7 0.5 V7 H0.5 Z" fill="#9a9a9a"/></svg><svg class="r" style="left:721px;top:345px;" width="13" height="12" viewBox="0 0 13 12"><rect x="0" y="0" width="13" height="12" fill="#d8d8d8"/><rect x="1" y="3" width="3" height="2" fill="#474747"/><rect x="1" y="6" width="3" height="2" fill="#474747"/><rect x="1" y="9" width="3" height="2" fill="#474747"/><rect x="5" y="3" width="3" height="2" fill="#474747"/><rect x="5" y="6" width="3" height="2" fill="#474747"/><rect x="5" y="9" width="3" height="2" fill="#474747"/><rect x="9" y="3" width="3" height="2" fill="#474747"/><rect x="9" y="6" width="3" height="2" fill="#474747"/><rect x="9" y="9" width="3" height="2" fill="#474747"/></svg><div class="t" style="left:746.4px;top:346.83px;font-size:11.9px;color:#ffffff;font-weight:400;font-family:'Liberation Sans', sans-serif;letter-spacing:-0.25px;">FactInternetSales</div><div class="r" style="left:701px;top:366px;width:197px;height:22px;background:#363636;border-radius:3px 0 0 3px;"></div><div class="r" style="left:701px;top:367px;width:210px;height:20px;background:#616161;border-radius:3px;box-sizing:border-box;"></div><div class="r" style="left:727px;top:372px;width:12px;height:12px;background:#ffffff;border:2px solid #c8c8c8;box-sizing:border-box;"></div><div class="t" style="left:760.2px;top:372.93px;font-size:11.9px;color:#ffffff;font-weight:400;font-family:'Liberation Sans', sans-serif;letter-spacing:-0.8px;">BK_SO</div><div class="r" style="left:701px;top:388px;width:197px;height:22px;background:#363636;border-radius:3px 0 0 3px;"></div><div class="r" style="left:701px;top:389px;width:210px;height:20px;background:#616161;border-radius:3px;box-sizing:border-box;"></div><div class="r" style="left:727px;top:394px;width:12px;height:12px;background:#ffffff;border:2px solid #c8c8c8;box-sizing:border-box;"></div><svg class="r" style="left:743px;top:395px;" width="11" height="11" viewBox="0 0 11 11"><path d="M9.5 1.5 H1.5 L5.5 5.5 L1.5 9.5 H9.5" fill="none" stroke="#a6a6a6" stroke-width="1.1"/></svg><div class="t" style="left:760.2px;top:394.93px;font-size:11.9px;color:#ffffff;font-weight:400;font-family:'Liberation Sans', sans-serif;letter-spacing:0.15px;">DiscountAmount</div><div class="r" style="left:701px;top:410px;width:197px;height:22px;background:#363636;border-radius:3px 0 0 3px;"></div><div class="r" style="left:701px;top:411px;width:210px;height:20px;background:#616161;border-radius:3px;box-sizing:border-box;"></div><div class="r" style="left:727px;top:416px;width:12px;height:12px;background:#ffffff;border:2px solid #c8c8c8;box-sizing:border-box;"></div><svg class="r" style="left:743px;top:417px;" width="11" height="11" viewBox="0 0 11 11"><path d="M9.5 1.5 H1.5 L5.5 5.5 L1.5 9.5 H9.5" fill="none" stroke="#a6a6a6" stroke-width="1.1"/></svg><div class="t" style="left:760.2px;top:416.93px;font-size:11.9px;color:#ffffff;font-weight:400;font-family:'Liberation Sans', sans-serif;">ExtendedAmount</div><div class="r" style="left:701px;top:432px;width:197px;height:22px;background:#363636;border-radius:3px 0 0 3px;"></div><div class="r" style="left:701px;top:433px;width:210px;height:20px;background:#616161;border-radius:3px;box-sizing:border-box;border:1px solid #f2c811;"></div><div class="r" style="left:727px;top:438px;width:12px;height:12px;background:#ffffff;border:2px solid #c8c8c8;box-sizing:border-box;"></div><svg class="r" style="left:744px;top:437px;" width="9" height="13" viewBox="0 0 9 13"><rect x="0" y="0" width="9" height="13" fill="#b8b8b8"/><rect x="1.5" y="1.5" width="6" height="2" fill="#616161"/><rect x="1.5" y="5.0" width="1.3" height="1.3" fill="#616161"/><rect x="1.5" y="7.5" width="1.3" height="1.3" fill="#616161"/><rect x="1.5" y="10.0" width="1.3" height="1.3" fill="#616161"/><rect x="3.7" y="5.0" width="1.3" height="1.3" fill="#616161"/><rect x="3.7" y="7.5" width="1.3" height="1.3" fill="#616161"/><rect x="3.7" y="10.0" width="1.3" height="1.3" fill="#616161"/><rect x="5.9" y="5.0" width="1.3" height="1.3" fill="#616161"/><rect x="5.9" y="7.5" width="1.3" height="1.3" fill="#616161"/><rect x="5.9" y="10.0" width="1.3" height="1.3" fill="#616161"/></svg><div class="t" style="left:760.2px;top:438.93px;font-size:11.9px;color:#ffffff;font-weight:400;font-family:'Liberation Sans', sans-serif;">Measure</div><div class="r" style="left:701px;top:454px;width:197px;height:20px;background:#363636;border-radius:3px 0 0 3px;"></div><div class="r" style="left:701px;top:455px;width:210px;height:20px;background:#616161;border-radius:3px;box-sizing:border-box;"></div><div class="r" style="left:727px;top:460px;width:12px;height:12px;background:#ffffff;border:2px solid #c8c8c8;box-sizing:border-box;"></div><svg class="r" style="left:743px;top:461px;" width="11" height="11" viewBox="0 0 11 11"><path d="M9.5 1.5 H1.5 L5.5 5.5 L1.5 9.5 H9.5" fill="none" stroke="#a6a6a6" stroke-width="1.1"/></svg><div class="t" style="left:760.2px;top:460.93px;font-size:11.9px;color:#ffffff;font-weight:400;font-family:'Liberation Sans', sans-serif;">OrderQuantity</div><div class="t" style="left:61.5px;width:600px;text-align:center;top:327.24px;font-size:31.5px;color:#f44848;font-weight:400;font-family:'Liberation Sans', sans-serif;">it&#39;s right there</div><div class="t" style="left:61px;width:600px;text-align:center;top:363.24px;font-size:31.5px;color:#f44848;font-weight:400;font-family:'Liberation Sans', sans-serif;">dummy!</div><svg class="r" style="left:430px;top:355px;" width="300" height="60" viewBox="0 0 300 60"><path d="M10 13.2 L272 41.5" stroke="#f44848" stroke-width="5"/><path d="M280.5 42.7 L271 36.5 L270 47 Z" fill="#f44848"/></svg>
</body></html>
